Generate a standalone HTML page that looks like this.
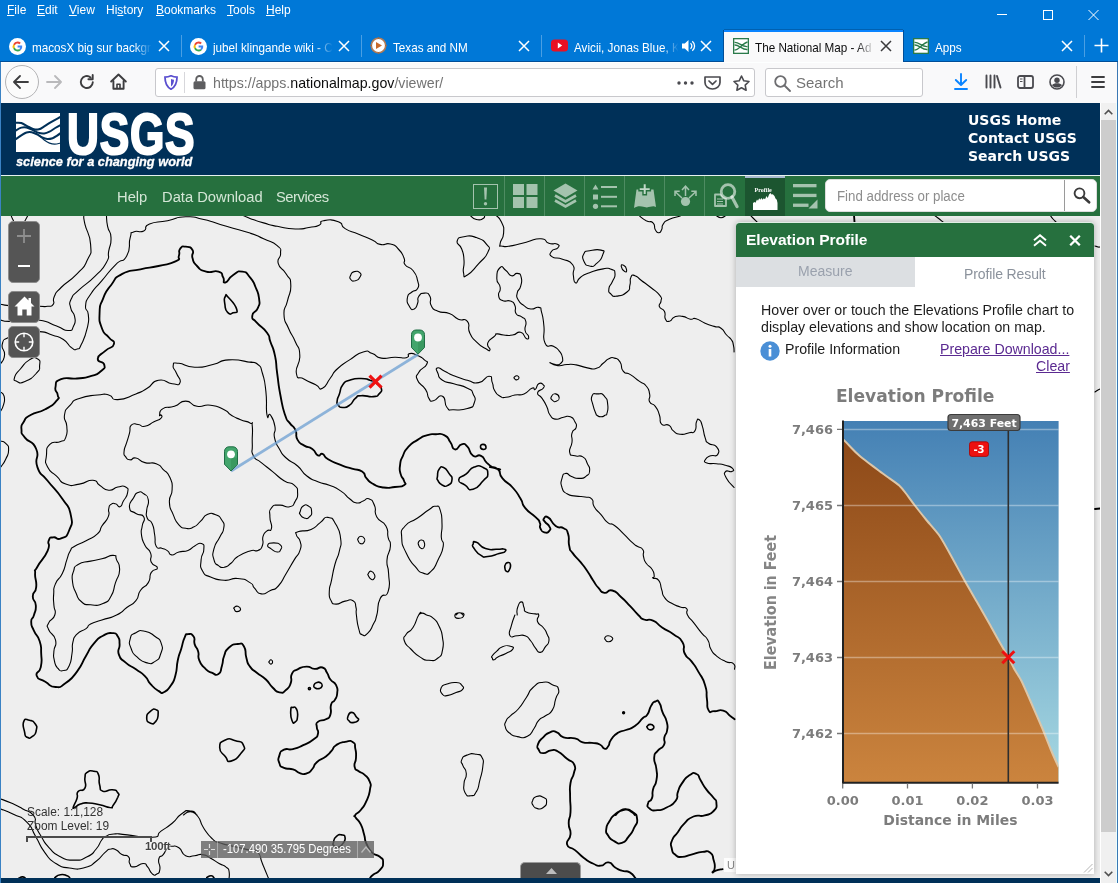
<!DOCTYPE html>
<html lang="en">
<head>
<meta charset="utf-8">
<title>The National Map - Advanced Viewer</title>
<style>
*{box-sizing:border-box;margin:0;padding:0}
html,body{width:1118px;height:883px;overflow:hidden;background:#0078d7}
body{position:relative;font-family:"Liberation Sans",sans-serif;font-size:14px;color:#000}
.abs{position:absolute}
#chrome,#page,#vscroll{will-change:transform}
/* ---------- browser chrome ---------- */
#chrome{position:absolute;left:0;top:0;width:1118px;height:103px;background:#0078d7}
#menubar{position:absolute;left:0;top:0;width:1118px;height:30px;color:#fff;font-size:12px}
#menubar span{position:absolute;top:2px;line-height:17px;white-space:nowrap}
#menubar u{text-decoration:underline;text-underline-offset:1px}
#tabs{position:absolute;left:0;top:30px;width:1118px;height:32px;color:#fff;font-size:13.5px}
.tab{position:absolute;top:0;height:32px;white-space:nowrap;overflow:hidden}
#tabs .t{position:absolute;top:8.500px;line-height:17px;font-size:13px;transform:scaleX(.9);transform-origin:0 50%;white-space:nowrap;overflow:hidden;-webkit-mask-image:linear-gradient(90deg,#000 85%,transparent 100%);mask-image:linear-gradient(90deg,#000 85%,transparent 100%)}
.tabsep{position:absolute;top:5px;width:1px;height:22px;background:#4a9fe3}
#navbar{position:absolute;left:1px;top:62px;width:1117px;height:41px;background:#f9f9fa;box-shadow:inset 0 1px 0 #fdffff}
#urlbar{position:absolute;left:154px;top:6px;width:600px;height:29px;background:#fff;border:1px solid #c8c8cc;border-radius:3px}
#searchbar{position:absolute;left:764px;top:6px;width:158px;height:29px;background:#fff;border:1px solid #c8c8cc;border-radius:3px}
/* ---------- page ---------- */
#page{position:absolute;left:1px;top:103px;width:1099px;height:780px;background:#eee;overflow:hidden}
#usgs{position:absolute;left:0;top:0;width:1099px;height:72px;background:#003058}
#toolbar{position:absolute;left:0;top:72px;width:1099px;height:41px;background:#26703e;border-top:1px solid #e6f2f0}
.navl{top:10.500px;font-size:15.500px;line-height:19px;color:#d4e6d6;white-space:nowrap;transform:scaleX(.95);transform-origin:0 0}
.sep{position:absolute;top:0;width:1px;height:40px;background:#4e8c62}
#map{position:absolute;left:0;top:113px;width:1099px;height:662px;background:#eeeeee;overflow:hidden}
#footer{position:absolute;left:0;top:775px;width:1099px;height:5px;background:#003058}
#vscroll{position:absolute;left:1100px;top:103px;width:17px;height:780px;background:#f0f0f0;border-right:1px solid #eaffff;border-left:1px solid #fff}


#panel{position:absolute;left:735px;top:119px;width:358px;height:652px;background:#fff;border-radius:4px 4px 0 0;box-shadow:0 0 6px rgba(0,0,0,.28)}
#phead{position:absolute;left:0;top:0;width:358px;height:35px;background:#26703e;border-radius:4px 4px 0 0;border-top:1px solid #dfeee4}
#phead .ttl{position:absolute;left:10px;top:7px;font-weight:bold;font-size:15.500px;line-height:19px;color:#fff;white-space:nowrap}
#tabm{position:absolute;left:0;top:35px;width:179px;height:30px;background:#dcdfe2}
.ptxt{position:absolute;white-space:nowrap;font-size:14.200px;line-height:17px;color:#1c1c1c}
.dv{font-family:"DejaVu Sans","Liberation Sans",sans-serif;font-weight:bold;fill:#7c7c7c}

.mbtn{position:absolute;left:7px;width:32px;background:#555;border:1px solid #8d8d8d;border-radius:5px}
</style>
</head>
<body>
<div id="chrome">
  <div id="menubar">
<span style="left:7px"><u>F</u>ile</span>
<span style="left:37px"><u>E</u>dit</span>
<span style="left:69px"><u>V</u>iew</span>
<span style="left:106px">Hi<u>s</u>tory</span>
<span style="left:156px"><u>B</u>ookmarks</span>
<span style="left:227px"><u>T</u>ools</span>
<span style="left:266px"><u>H</u>elp</span>
<svg class="abs" style="left:990px;top:5px" width="120" height="20" viewBox="0 0 120 20" fill="none" stroke="#fff" stroke-width="1">
<path d="M7 9.5h10"/><rect x="53.5" y="5.5" width="9" height="9"/><path d="M98.5 5l10 10M108.5 5l-10 10"/></svg>
</div>
  <div id="tabs">
<div class="abs" style="left:0;top:31px;width:1118px;height:1px;background:#004e98"></div><svg class="abs" style="left:9px;top:8px" width="17" height="17" viewBox="0 0 17 17"><circle cx="8.5" cy="8.5" r="8.5" fill="#fff"/>
<path d="M8.5 3.6a4.9 4.9 0 0 1 3.3 1.25l-1.4 1.35A2.9 2.9 0 0 0 5.8 7.4L4.2 6.2A4.9 4.9 0 0 1 8.5 3.6z" fill="#ea4335"/>
<path d="M4.2 6.2l1.6 1.2a2.9 2.9 0 0 0 0 2.2l-1.6 1.2a4.9 4.9 0 0 1 0-4.6z" fill="#fbbc05"/>
<path d="M4.2 10.8l1.6-1.2a2.9 2.9 0 0 0 4.4 1.4l1.5 1.2a4.9 4.9 0 0 1-7.5-1.4z" fill="#34a853"/>
<path d="M8.6 7.6h4.6a4.9 4.9 0 0 1-1.5 4.6l-1.5-1.2a2.6 2.6 0 0 0 1-1.6H8.6z" fill="#4285f4"/></svg><span class="t" style="left:32px;width:133px">macosX big sur backgr</span><svg class="abs" style="left:158px;top:10px" width="12" height="12" viewBox="0 0 12 12" fill="none" stroke="#fff" stroke-width="1.5"><path d="M1 1l10 10M11 1L1 11"/></svg><div class="tabsep" style="left:181px"></div><svg class="abs" style="left:190px;top:8px" width="17" height="17" viewBox="0 0 17 17"><circle cx="8.5" cy="8.5" r="8.5" fill="#fff"/>
<path d="M8.5 3.6a4.9 4.9 0 0 1 3.3 1.25l-1.4 1.35A2.9 2.9 0 0 0 5.8 7.4L4.2 6.2A4.9 4.9 0 0 1 8.5 3.6z" fill="#ea4335"/>
<path d="M4.2 6.2l1.6 1.2a2.9 2.9 0 0 0 0 2.2l-1.6 1.2a4.9 4.9 0 0 1 0-4.6z" fill="#fbbc05"/>
<path d="M4.2 10.8l1.6-1.2a2.9 2.9 0 0 0 4.4 1.4l1.5 1.2a4.9 4.9 0 0 1-7.5-1.4z" fill="#34a853"/>
<path d="M8.6 7.6h4.6a4.9 4.9 0 0 1-1.5 4.6l-1.5-1.2a2.6 2.6 0 0 0 1-1.6H8.6z" fill="#4285f4"/></svg><span class="t" style="left:213px;width:133px">jubel klingande wiki - C</span><svg class="abs" style="left:338px;top:10px" width="12" height="12" viewBox="0 0 12 12" fill="none" stroke="#fff" stroke-width="1.5"><path d="M1 1l10 10M11 1L1 11"/></svg><div class="tabsep" style="left:361px"></div><svg class="abs" style="left:370px;top:7px" width="17" height="17" viewBox="0 0 17 17"><circle cx="8.5" cy="8.500" r="7.200" fill="#fff" stroke="#b07a55" stroke-width="1.600"/><path d="M6 5l6 3.500-6 3.500z" fill="#c86a2a"/><path d="M8.500 0v2M8.500 15v2M0 8.500h2M15 8.500h2" stroke="#9a6a4a" stroke-width="1.200"/></svg><span class="t" style="left:393px;width:133px">Texas and NM</span><svg class="abs" style="left:518px;top:10px" width="12" height="12" viewBox="0 0 12 12" fill="none" stroke="#fff" stroke-width="1.5"><path d="M1 1l10 10M11 1L1 11"/></svg><div class="tabsep" style="left:541px"></div><svg class="abs" style="left:551px;top:9px" width="17" height="13" viewBox="0 0 17 13"><rect x="0" y="0.500" width="17" height="12" rx="3.500" fill="#e81123"/><path d="M6.800 3.600l4.400 2.900-4.400 2.900z" fill="#fff"/></svg><span class="t" style="left:574px;width:116px">Avicii, Jonas Blue, K</span><svg class="abs" style="left:681px;top:9px" width="16" height="14" viewBox="0 0 16 14"><path d="M1 4.500h2.800L7.500 1v12L3.800 9.500H1z" fill="#fff"/><path d="M9.500 4.200a3.600 3.600 0 0 1 0 5.600M11.300 2.200a6.200 6.200 0 0 1 0 9.600" fill="none" stroke="#fff" stroke-width="1.300"/></svg><svg class="abs" style="left:700px;top:10px" width="12" height="12" viewBox="0 0 12 12" fill="none" stroke="#fff" stroke-width="1.5"><path d="M1 1l10 10M11 1L1 11"/></svg><div class="abs" style="left:724px;top:0;width:179px;height:32px;background:#f9f9fa;border-top:2px solid #0a84ff;box-shadow:0 -1px 0 #0060b0,-1px 0 0 #004e98,1px 0 0 #004e98"></div><svg class="abs" style="left:733px;top:8px" width="16" height="16" viewBox="0 0 16 16"><rect x="0.5" y="0.5" width="15" height="15" fill="#fff" stroke="#2a7a4a" stroke-width="1.6"/><path d="M1.5 4.5C6 4 9 9 14.5 8.500M1.500 7C6 6.500 9 12 14.5 11.500M1.500 12C6 12 10 5 14.5 4" fill="none" stroke="#2a7a4a" stroke-width="1.300"/></svg><span class="t" style="left:755px;width:133px;color:#0c0c0d">The National Map - Ad</span><svg class="abs" style="left:880px;top:10px" width="12" height="12" viewBox="0 0 12 12" fill="none" stroke="#3a3a3c" stroke-width="1.5"><path d="M1 1l10 10M11 1L1 11"/></svg><svg class="abs" style="left:913px;top:8px" width="16" height="16" viewBox="0 0 16 16"><rect x="0.5" y="0.5" width="15" height="15" fill="#fff" stroke="#2a7a4a" stroke-width="1.6"/><path d="M1.5 4.5C6 4 9 9 14.5 8.500M1.500 7C6 6.500 9 12 14.5 11.500M1.500 12C6 12 10 5 14.5 4" fill="none" stroke="#2a7a4a" stroke-width="1.300"/></svg><span class="t" style="left:935px;width:100px">Apps</span><svg class="abs" style="left:1061px;top:10px" width="12" height="12" viewBox="0 0 12 12" fill="none" stroke="#fff" stroke-width="1.5"><path d="M1 1l10 10M11 1L1 11"/></svg><div class="tabsep" style="left:1084px"></div><svg class="abs" style="left:1094px;top:8px" width="15" height="15" viewBox="0 0 15 15" stroke="#fff" stroke-width="1.600"><path d="M7.500 0.500v14M0.500 7.500h14"/></svg>
</div>
  <div id="navbar">
<div class="abs" style="left:4px;top:3px;width:34px;height:34px;border:1px solid #b4b4b6;border-radius:50%;background:#fbfbfb"></div>
<svg class="abs" style="left:12px;top:13px" width="16" height="14" viewBox="0 0 16 14" fill="none" stroke="#3d3d3f" stroke-width="1.800" stroke-linecap="round" stroke-linejoin="round"><path d="M15 7H1.500M7 1L1 7l6 6"/></svg>
<svg class="abs" style="left:45px;top:13px" width="16" height="14" viewBox="0 0 16 14" fill="none" stroke="#b9b9bb" stroke-width="1.800" stroke-linecap="round" stroke-linejoin="round"><path d="M1 7h13.500M9 1l6 6-6 6"/></svg>
<svg class="abs" style="left:78px;top:12px" width="16" height="16" viewBox="0 0 16 16" fill="none" stroke="#3d3d3f" stroke-width="1.900" stroke-linecap="round"><path d="M13.800 8.300A6 6 0 1 1 11.600 3.400"/><path d="M13.700 1v4.300H9.400" stroke-linejoin="round"/></svg>
<svg class="abs" style="left:109px;top:11px" width="17" height="17" viewBox="0 0 17 17" fill="none" stroke="#3d3d3f" stroke-width="1.900" stroke-linejoin="round" stroke-linecap="round"><path d="M1.200 8.500L8.500 1.500l7.300 7"/><path d="M3.400 8v7.700h10.200V8"/><path d="M7 15.500v-4.300h3v4.300" stroke-width="1.600"/></svg>
<div id="urlbar">
<svg class="abs" style="left:8px;top:6px" width="14" height="15" viewBox="0 0 14 15"><path d="M7 0.800c2 1 4 1.400 6 1.400 0 5.500-1.500 9.500-6 12-4.500-2.500-6-6.500-6-12 2 0 4-.4 6-1.400z" fill="#fff" stroke="#5a4fcf" stroke-width="1.800"/><path d="M7 4v7.500c2-1.500 3-4 3-6.700-1 0-2-.3-3-.8z" fill="#5a4fcf"/></svg>
<div class="abs" style="left:28px;top:3px;width:1px;height:21px;background:#d7d7db"></div>
<svg class="abs" style="left:37px;top:6px" width="13" height="15" viewBox="0 0 13 15"><path d="M3.200 6.500V4.300a3.300 3.300 0 0 1 6.600 0v2.200" fill="none" stroke="#5e5e60" stroke-width="1.800"/><rect x="0.500" y="6.300" width="12" height="8" rx="1.500" fill="#5e5e60"/></svg>
<span class="abs" id="urltxt" style="left:57px;top:4px;line-height:20px;font-size:14.2px;color:#737373;white-space:nowrap">https://apps.<span style="color:#0c0c0d">nationalmap.gov</span>/viewer/</span>
<svg class="abs" style="left:521px;top:12px" width="17" height="4" viewBox="0 0 17 4" fill="#4a4a4f"><circle cx="2" cy="2" r="1.700"/><circle cx="8.500" cy="2" r="1.700"/><circle cx="15" cy="2" r="1.700"/></svg>
<svg class="abs" style="left:548px;top:7px" width="17" height="14" viewBox="0 0 17 14" fill="none" stroke="#4a4a4f" stroke-width="1.700" stroke-linecap="round" stroke-linejoin="round"><path d="M1 1h15v5.500a7.500 6.500 0 0 1-15 0z"/><path d="M5 5l3.500 3.300L12 5"/></svg>
<svg class="abs" style="left:577px;top:6px" width="17" height="16" viewBox="0 0 17 16" fill="none" stroke="#4a4a4f" stroke-width="1.600" stroke-linejoin="round"><path d="M8.500 1l2.300 4.800 5.200.7-3.800 3.600.9 5.100-4.600-2.500-4.600 2.500.9-5.100L1 6.500l5.200-.7z"/></svg>
</div>
<div id="searchbar">
<svg class="abs" style="left:8px;top:6px" width="17" height="17" viewBox="0 0 17 17" fill="none" stroke="#6d6d70" stroke-width="1.800" stroke-linecap="round"><circle cx="6.500" cy="6.500" r="5.300"/><path d="M10.500 10.500L16 16"/></svg>
<span class="abs" style="left:30px;top:4px;line-height:20px;font-size:15px;color:#737373">Search</span>
</div>
<svg class="abs" style="left:953px;top:11px" width="14" height="17" viewBox="0 0 14 17" fill="none" stroke="#0a84ff" stroke-width="1.900" stroke-linecap="round" stroke-linejoin="round"><path d="M7 1v10.500M1.800 7L7 12l5.200-5M1 16h12"/></svg>
<svg class="abs" style="left:984px;top:12px" width="17" height="15" viewBox="0 0 17 15" fill="none" stroke="#4a4a4f" stroke-width="1.900" stroke-linecap="round"><path d="M1.500 1.500v12M5.500 1.500v12M9.500 1.500v12M12 2l3.500 11.500"/></svg>
<svg class="abs" style="left:1016px;top:13px" width="17" height="14" viewBox="0 0 17 14" fill="none" stroke="#4a4a4f" stroke-width="1.800"><rect x="1" y="1" width="15" height="12" rx="2"/><path d="M7.500 1v12"/><path d="M3 4h2.500M3 6.500h2.500" stroke-width="1.200"/></svg>
<svg class="abs" style="left:1048px;top:12px" width="16" height="16" viewBox="0 0 16 16"><circle cx="8" cy="8" r="7" fill="none" stroke="#4a4a4f" stroke-width="1.600"/><circle cx="8" cy="6.300" r="2.700" fill="#4a4a4f"/><path d="M3 11.200c1.200 1.500 3 2.300 5 2.300s3.800-.8 5-2.300c-1-1.400-2.800-2-5-2s-4 .6-5 2z" fill="#4a4a4f"/></svg>
<div class="abs" style="left:1075px;top:4px;width:1px;height:32px;background:#cfcfd2"></div>
<svg class="abs" style="left:1090px;top:13px" width="14" height="14" viewBox="0 0 14 14" stroke="#3d3d3f" stroke-width="1.900" stroke-linecap="round"><path d="M1 2h12M1 7h12M1 12h12"/></svg>
</div>
</div>
<div id="page">
  <div id="usgs">
<svg class="abs" style="left:15px;top:10px" width="44" height="39" viewBox="0 0 44 39"><rect width="44" height="39" fill="#fff"/>
<g fill="none" stroke="#003058"><path d="M-1 9.8C0.1 9.8 3.2 9.4 5.3 10C7.4 10.6 9.5 12.3 11.6 13.4C13.7 14.5 15.9 15.8 17.8 16.3C19.7 16.8 21.3 16.8 23 16.3C24.7 15.8 26.1 14.7 28.2 13.4C30.3 12.2 32.7 10.4 35.5 8.8C38.3 7.2 43.4 4.5 45 3.6" stroke-width="2.100"/><path d="M-1 18C0.1 17.4 3.4 15.3 5.3 14.7C7.2 14.1 8.6 14.1 10.5 14.5C12.4 14.9 14.9 16.2 16.8 17.1C18.7 18.0 20.1 19.1 22 19.7C23.9 20.3 26.3 20.7 28.2 20.5C30.1 20.3 31.7 19.6 33.5 18.7C35.3 17.8 37.3 16.1 39.2 15C41.1 13.9 44.0 12.4 45 11.9" stroke-width="1.900"/><path d="M-1 26.7C0.1 26.0 3.4 23.5 5.3 22.3C7.2 21.1 8.8 19.9 10.5 19.4C12.2 18.9 13.9 18.9 15.7 19.2C17.4 19.5 19.2 20.4 21 21.3C22.8 22.2 24.5 23.6 26.2 24.4C27.9 25.2 29.7 25.9 31.4 26C33.1 26.1 35.0 25.7 36.6 25.2C38.2 24.7 39.4 23.7 40.8 22.8C42.2 21.9 44.3 20.4 45 19.9" stroke-width="2.100"/><path d="M23 22.3C23.9 23.1 26.4 25.7 28.2 27C29.9 28.3 31.8 29.4 33.5 30.1C35.2 30.8 36.8 31.2 38.7 31.2C40.6 31.2 44.0 30.2 45 30" stroke-width="1.200"/></g></svg>
<div class="abs" id="usgstxt" style="left:66px;top:-1.500px;font-weight:bold;font-size:57px;line-height:64px;color:#fff;transform:scaleX(.775);transform-origin:0 0;-webkit-text-stroke:2.200px #fff;white-space:nowrap;letter-spacing:1px">USGS</div>
<div class="abs" id="tagline" style="left:15px;top:51px;font-weight:bold;font-style:italic;font-size:13.500px;line-height:16px;color:#fff;transform:scaleX(.948);transform-origin:0 0;white-space:nowrap;-webkit-text-stroke:.3px #fff">science for a changing world</div>
<div class="abs" id="usgslinks" style="left:967px;top:8px;font-family:'DejaVu Sans','Liberation Sans',sans-serif;font-weight:bold;font-size:14px;line-height:18px;color:#fff;white-space:nowrap">USGS Home<br>Contact USGS<br>Search USGS</div>
</div>
  <div id="toolbar">
<div class="abs navl" style="left:116px">Help</div>
<div class="abs navl" style="left:161px">Data Download</div>
<div class="abs navl" style="left:275px;letter-spacing:-.5px">Services</div>
<div class="sep" style="left:503px"></div><div class="sep" style="left:543px"></div><div class="sep" style="left:583px"></div><div class="sep" style="left:623px"></div><div class="sep" style="left:663px"></div><div class="sep" style="left:703px"></div>
<div class="abs" style="left:744px;top:0;width:40px;height:40px;background:#1c5530;border-top:2px solid #a8b9d0"></div>
<!-- ! -->
<svg class="abs" style="left:472px;top:8px" width="25" height="25" viewBox="0 0 25 25"><rect x="0.500" y="0.500" width="24" height="24" fill="none" stroke="rgba(255,255,255,.58)" stroke-width="1"/><path d="M11 3.500h3l-.6 12h-1.800z" fill="rgba(255,255,255,.58)"/><circle cx="12.500" cy="19.700" r="1.700" fill="rgba(255,255,255,.58)"/></svg>
<!-- grid -->
<svg class="abs" style="left:512px;top:8px" width="25" height="24" viewBox="0 0 25 24" fill="rgba(255,255,255,.58)"><rect x="0" y="0" width="11" height="11"/><rect x="13.500" y="0" width="11" height="11"/><rect x="0" y="13" width="11" height="11"/><rect x="13.500" y="13" width="11" height="11"/></svg>
<!-- layers -->
<svg class="abs" style="left:552px;top:7px" width="25" height="26" viewBox="0 0 25 26"><path d="M12.500 0.500L24.500 7.500 12.500 14.500 0.500 7.500z" fill="rgba(255,255,255,.58)"/><path d="M2 12.500L12.500 18.500 23 12.500M2 17.500L12.500 23.500 23 17.500" fill="none" stroke="rgba(255,255,255,.58)" stroke-width="2.600"/></svg>
<!-- list -->
<svg class="abs" style="left:591px;top:8px" width="26" height="26" viewBox="0 0 26 26" fill="rgba(255,255,255,.58)"><path d="M3.500 0.500L6.500 5.500H0.500z"/><rect x="1" y="10.500" width="5" height="5"/><circle cx="3.500" cy="22.300" r="2.600"/><rect x="9" y="2" width="16" height="2"/><rect x="9" y="11.800" width="16" height="2"/><rect x="9" y="21.300" width="16" height="2"/></svg>
<!-- add data -->
<svg class="abs" style="left:632px;top:7px" width="24" height="26" viewBox="0 0 24 26"><path d="M3.500 6.500H20.500L23 24c-4-2-7 1.500-11.500 0S4 23 1 25z" fill="rgba(255,255,255,.58)"/><path d="M10 0.500h3.400v4h4v3.200h-4v4H10v-4H6v-3.200h4z" fill="#c2dac9" stroke="#26703e" stroke-width="1.400"/></svg>
<!-- share -->
<svg class="abs" style="left:672px;top:9px" width="25" height="22" viewBox="0 0 25 22"><circle cx="12.500" cy="16.500" r="4.600" fill="rgba(255,255,255,.58)"/><g fill="none" stroke="rgba(255,255,255,.58)" stroke-width="1.500"><path d="M12.500 11V1.500M9 5l3.500-3.800L16 5"/><path d="M9 13L2 6.500M2 11V6.300h4.700"/><path d="M16 13l7-6.500M23 11V6.300h-4.700"/></g></svg>
<!-- search doc -->
<svg class="abs" style="left:712px;top:7px" width="26" height="26" viewBox="0 0 26 26"><circle cx="15" cy="8.500" r="6.800" fill="none" stroke="rgba(255,255,255,.58)" stroke-width="2.800"/><path d="M19 14l5 9.500" stroke="rgba(255,255,255,.58)" stroke-width="3.200" stroke-linecap="round"/><path d="M2 11.500h5.500c1 2.500 3 4 5.500 4.500V23H2z" fill="none" stroke="rgba(255,255,255,.58)" stroke-width="1.800" stroke-linejoin="round"/><path d="M4 16h6M4 18.500h6M4 21h6" stroke="rgba(255,255,255,.58)" stroke-width="1.200"/></svg>
<!-- profile -->
<div class="abs" style="left:753.500px;top:10px;font-family:'Liberation Serif',serif;font-weight:bold;font-size:6px;line-height:8px;color:#fff">Profile</div>
<svg class="abs" style="left:752px;top:17px" width="25" height="17" viewBox="0 0 25 17"><path d="M0 17V10l1.500-1 1 .8L4 6.500l1 1.300 1.200-2.600 1 1.600L8.500 5l1 1.800 1.300-1.500 1.200 1L13.500 3l1.200 2 1.500-3.800L17.500 0l1 1.500 1.300-.3L21.500 3l1 2.500 1.300 1.300L24.500 10v7z" fill="#fff"/></svg>
<!-- menu -->
<svg class="abs" style="left:792px;top:8px" width="25" height="25" viewBox="0 0 25 25" fill="rgba(255,255,255,.58)"><rect x="0" y="0" width="23.500" height="3.300"/><rect x="0" y="9.800" width="23.500" height="3.300"/><rect x="0" y="19.600" width="15.500" height="3.300"/><path d="M24.500 15.500v9h-9z"/></svg>
<!-- search box -->
<div class="abs" style="left:824px;top:3px;width:272px;height:33px;background:#fff;border-radius:5px;border:1px solid #ddd"></div>
<div class="abs" style="left:1063px;top:4px;width:1px;height:31px;background:#9a9a9a"></div>
<div class="abs" id="find" style="left:836px;top:10px;font-size:15.200px;line-height:19px;color:#8d8d8d;white-space:nowrap;transform:scaleX(.875);transform-origin:0 0">Find address or place</div>
<svg class="abs" style="left:1072px;top:11px" width="18" height="17" viewBox="0 0 18 17" fill="none" stroke="#3b3b3b"><circle cx="6.500" cy="6.300" r="4.900" stroke-width="1.900"/><path d="M10.300 10l5.800 5.300" stroke-width="2.600" stroke-linecap="round"/></svg>
</div>
  <div id="map"><!--MAPSVG--><svg class="abs" id="contours" style="left:0;top:0" width="1099" height="662" viewBox="1 216 1099 662">
<path fill="none" stroke="#000" stroke-width="1.1" stroke-linejoin="round" stroke-linecap="round" d="M0.0 364.5C1.5 361.4 3.8 362.2 4.5 355.4C5.3 348.6 0.8 350.1 2.3 344.1C3.8 338.0 2.3 341.1 9.1 337.3C15.9 333.5 12.5 334.6 22.6 332.8C32.8 330.9 29.8 330.9 39.6 331.6C49.4 332.4 44.2 332.4 52.1 335.0C60.0 337.7 57.0 335.4 63.4 339.5C69.8 343.7 66.8 344.3 71.3 347.5C75.9 350.6 73.6 350.2 77.0 349.1C80.4 347.9 78.1 351.0 81.5 344.1C84.9 337.1 84.9 338.0 87.2 328.2C89.4 318.4 88.8 322.2 88.3 314.6C87.8 307.1 84.8 312.4 85.6 305.6C86.4 298.8 85.1 302.6 90.6 294.3C96.0 286.0 93.6 290.5 101.9 280.7C110.2 270.9 107.2 273.1 115.5 264.8C123.8 256.5 121.9 264.8 126.8 255.8C131.7 246.7 127.9 245.6 130.2 237.6C132.5 229.7 129.1 234.2 133.6 232.0C138.1 229.7 138.5 233.5 143.8 230.9C149.1 228.2 141.5 227.5 149.5 224.1C157.4 220.7 155.5 223.1 167.6 220.7C179.6 218.2 173.6 217.2 185.7 216.8C197.8 216.4 190.2 216.4 203.8 219.5C217.4 222.7 211.1 221.8 226.4 226.3C241.8 230.9 237.6 229.0 250.0 233.1C262.4 237.3 254.5 234.6 263.6 238.8C272.6 242.9 271.5 240.7 277.2 245.6C282.8 250.5 280.2 247.5 280.6 253.5C280.9 259.5 276.4 256.9 278.3 263.7C280.2 270.5 282.1 266.7 286.2 273.9C290.4 281.0 290.4 276.1 290.8 285.2C291.1 294.3 289.6 291.2 287.4 301.1C285.1 310.9 283.6 305.6 284.0 314.6C284.3 323.7 284.7 319.2 288.5 328.2C292.3 337.3 291.5 332.8 295.3 341.8C299.1 350.9 299.4 344.8 299.8 355.4C300.2 366.0 294.9 365.6 296.4 373.5C297.9 381.4 297.9 375.4 304.3 379.2C310.8 382.9 309.6 381.8 315.7 384.8C321.7 387.9 317.6 390.5 322.5 388.2C327.4 386.0 325.5 384.5 330.4 378.0C335.3 371.6 330.8 375.0 337.2 369.0C343.6 362.9 341.0 365.6 349.6 359.9C358.3 354.3 355.7 354.1 363.2 352.0C370.8 349.9 366.2 351.5 372.3 353.6C378.3 355.6 373.8 356.9 381.3 358.1C388.9 359.3 386.6 357.4 394.9 357.2C403.2 357.1 401.3 358.9 406.2 357.7C411.2 356.5 405.9 354.3 409.6 353.6C413.4 352.8 412.7 353.3 417.6 355.4C422.5 357.5 421.3 356.9 424.4 359.9C427.4 362.9 428.5 360.3 426.6 364.5C424.7 368.6 421.7 367.1 418.7 372.4C415.7 377.7 415.3 374.6 417.6 380.3C419.8 386.0 421.7 383.3 425.5 389.4C429.3 395.4 426.3 394.6 428.9 398.4C431.5 402.2 428.9 401.4 433.4 400.7C438.0 399.9 438.0 393.9 442.5 396.2C447.0 398.4 443.2 403.0 447.0 407.5C450.8 412.0 447.0 409.4 453.8 409.7C460.6 410.1 460.6 410.9 467.4 408.6C474.2 406.3 472.3 407.9 474.2 403.0C476.1 398.0 475.3 398.8 473.1 393.9C470.8 389.0 473.8 391.6 467.4 388.2C461.0 384.8 462.1 386.3 453.8 383.7C445.5 381.1 447.8 383.7 442.5 380.3C437.2 376.9 439.6 377.7 438.0 373.5C436.3 369.4 435.2 368.6 437.5 367.9C439.8 367.1 439.3 368.6 444.7 371.2C450.2 373.9 446.3 372.8 453.8 375.8C461.4 378.8 459.1 378.0 467.4 380.3C475.7 382.6 471.5 383.9 478.7 382.6C485.9 381.2 484.4 376.2 488.9 376.2C493.4 376.2 490.4 377.8 492.3 382.6C494.2 387.3 492.0 386.0 494.6 390.5C497.1 395.0 496.2 393.9 500.0 396.2C503.8 398.4 500.9 397.7 505.9 397.3C510.8 396.9 508.9 396.2 514.9 395.0C520.9 393.9 518.3 396.2 524.0 393.9C529.6 391.6 528.1 389.7 531.9 388.2C535.7 386.7 533.0 390.9 535.3 389.4C537.6 387.9 536.0 385.2 538.7 383.7C541.3 382.2 541.7 383.3 543.2 384.8C544.7 386.3 545.1 385.6 543.2 388.2C541.3 390.9 537.9 389.4 537.6 392.8C537.2 396.2 539.1 393.9 542.1 398.4C545.1 403.0 544.0 400.8 546.6 406.3C549.3 411.9 547.0 410.7 550.0 415.0C553.0 419.2 551.1 418.3 555.7 419.1C560.2 419.8 558.7 418.0 563.6 417.3C568.5 416.5 566.6 415.3 570.4 416.8C574.2 418.3 573.0 418.2 574.9 421.8C576.8 425.3 577.0 423.7 576.1 427.5C575.1 431.2 573.3 428.2 572.0 433.1C570.6 438.0 572.7 435.8 572.0 442.2C571.2 448.6 568.7 447.8 569.7 452.4C570.7 456.9 570.5 454.3 574.9 455.8C579.3 457.3 578.7 454.3 582.8 456.9C587.0 459.5 585.1 459.2 587.4 463.7C589.6 468.2 590.0 466.3 589.6 470.5C589.3 474.6 589.6 473.5 586.2 476.1C582.8 478.8 584.4 478.3 579.4 478.4C574.5 478.6 576.1 478.3 571.5 476.6C567.0 474.9 569.0 472.8 565.9 473.4C562.7 474.0 563.3 473.7 562.0 478.4C560.7 483.1 560.4 482.3 562.0 487.5C563.7 492.6 562.3 490.9 567.0 493.8C571.7 496.7 570.0 495.0 576.1 496.1C582.1 497.1 579.8 495.9 585.1 497.0C590.4 498.0 588.9 496.0 591.9 499.2C594.9 502.5 591.1 501.6 594.2 506.7C597.2 511.8 596.4 509.4 601.0 514.6C605.5 519.9 603.2 518.9 607.8 522.6C612.3 526.2 609.3 521.7 614.5 525.5C619.8 529.3 617.6 528.1 623.6 533.9C629.6 539.7 628.1 538.8 632.7 542.9C637.2 547.1 633.8 544.1 637.2 546.3C640.6 548.6 640.7 546.3 642.9 549.7C645.0 553.1 642.4 552.0 643.5 556.5C644.7 561.1 643.5 559.2 646.2 563.3C649.0 567.5 649.3 564.8 651.9 569.0C654.6 573.1 653.8 572.8 654.2 575.8C654.6 578.8 651.5 576.5 653.0 578.0C654.6 579.6 655.8 576.5 658.7 580.3C661.6 584.1 659.8 583.7 661.6 589.4C663.5 595.0 661.2 592.8 664.4 597.3C667.5 601.8 665.9 599.7 671.2 603.0C676.4 606.2 675.1 605.1 680.2 607.0C685.4 608.9 684.1 606.0 686.6 608.6C689.0 611.3 685.0 610.2 687.5 615.0C689.9 619.7 689.0 616.9 693.8 622.9C698.6 629.0 697.1 627.5 701.7 633.1C706.4 638.8 704.8 634.6 707.8 639.9C710.9 645.2 707.9 643.7 710.8 649.0C713.7 654.3 711.5 651.6 716.4 655.8C721.4 659.9 719.8 658.8 725.5 661.4C731.2 664.1 730.4 661.0 733.4 663.7C736.5 666.3 734.2 667.5 734.6 669.3 M242.3 215.0C244.9 216.1 242.9 215.8 250.0 218.4C257.1 221.0 254.5 220.3 263.6 222.9C272.6 225.6 266.6 224.3 277.2 226.3C287.7 228.4 284.7 228.7 295.3 229.0C305.9 229.4 301.0 228.7 308.9 227.5C316.8 226.2 314.2 227.5 319.1 225.2C324.0 222.9 317.2 221.8 323.6 220.7C330.0 219.5 331.1 219.2 338.3 221.8C345.5 224.4 338.3 224.4 345.1 228.6C351.9 232.7 349.6 230.5 358.7 234.2C367.8 238.0 365.1 236.5 372.3 239.9C379.5 243.3 374.2 243.1 380.2 244.4C386.2 245.8 384.4 242.5 390.4 244.0C396.4 245.5 393.8 244.3 398.3 249.0C402.9 253.6 401.7 252.7 404.0 258.0C406.2 263.3 402.1 260.7 405.1 264.8C408.1 269.0 408.9 265.2 413.0 270.5C417.2 275.8 416.1 274.6 417.6 280.7C419.1 286.7 419.5 284.8 417.6 288.6C415.7 292.4 415.3 289.0 411.9 292.0C408.5 295.0 408.1 292.7 407.4 297.7C406.6 302.6 407.4 302.9 409.6 306.7C411.9 310.5 411.5 310.1 414.2 309.0C416.8 307.8 416.1 307.5 417.6 303.3C419.1 299.2 416.4 299.9 418.7 296.5C421.0 293.1 420.6 293.1 424.4 293.1C428.1 293.1 427.8 292.4 430.0 296.5C432.3 300.7 428.5 300.7 431.2 305.6C433.8 310.5 431.9 308.6 438.0 311.2C444.0 313.9 442.5 310.9 449.3 313.5C456.1 316.1 452.3 316.5 458.3 319.2C464.4 321.8 463.6 316.9 467.4 321.4C471.2 326.0 466.6 326.0 469.7 332.8C472.7 339.5 471.2 336.5 476.4 341.8C481.7 347.1 481.0 346.0 485.5 348.6C490.0 351.2 489.3 351.6 490.0 349.7C490.8 347.9 486.3 347.5 487.8 342.9C489.3 338.4 491.6 339.2 494.6 336.2C497.6 333.1 493.8 334.3 496.8 333.9C499.8 333.5 498.3 334.6 503.6 335.0C508.9 335.4 507.0 335.9 512.6 335.0C518.3 334.1 516.0 331.2 520.6 332.3C525.1 333.4 523.6 337.1 526.2 338.4C528.9 339.7 528.9 338.8 528.5 336.2C528.1 333.5 526.0 335.4 525.1 330.5C524.2 325.6 526.9 326.0 525.8 321.4C524.6 316.9 524.9 319.5 521.7 316.9C518.5 314.3 518.3 317.3 516.0 313.5C513.8 309.7 516.8 309.7 514.9 305.6C513.0 301.4 514.5 302.7 510.4 301.1C506.2 299.4 506.4 302.5 502.5 300.6C498.5 298.7 499.4 299.8 498.6 295.4C497.9 291.0 500.8 293.1 500.2 287.5C499.6 281.8 496.8 285.0 496.8 278.4C496.8 271.8 497.2 270.2 500.2 267.5C503.2 264.9 502.1 267.8 505.9 270.5C509.6 273.2 507.7 274.7 511.5 275.7C515.3 276.7 513.9 272.9 517.2 273.4C520.4 274.0 520.1 273.0 521.2 277.3C522.4 281.6 521.9 281.0 520.6 286.3C519.2 291.6 517.9 288.6 517.2 293.1C516.4 297.7 516.0 295.8 518.3 299.9C520.6 304.1 519.8 302.6 524.0 305.6C528.1 308.6 525.9 308.4 530.8 309.0C535.7 309.6 535.1 306.3 538.7 307.4C542.3 308.5 539.9 306.2 541.6 312.4C543.4 318.6 542.8 315.8 543.9 326.0C545.0 336.2 541.9 336.2 545.0 342.9C548.2 349.7 548.7 343.7 553.4 346.3C558.1 349.0 556.0 347.1 559.1 350.9C562.1 354.6 561.9 353.5 562.5 357.7C563.0 361.8 562.9 361.1 560.7 363.3C558.4 365.6 559.2 364.7 555.7 364.5C552.1 364.2 549.3 362.3 550.0 362.6C550.8 363.0 552.3 365.0 557.9 365.6C563.6 366.2 561.0 364.7 567.0 364.5C573.0 364.2 569.3 363.8 576.1 364.9C582.8 366.0 580.6 366.7 587.4 367.9C594.2 369.0 591.1 369.8 596.4 368.3C601.7 366.8 599.1 366.5 603.2 363.3C607.4 360.2 605.1 360.5 608.9 358.8C612.7 357.1 610.8 357.0 614.5 358.1C618.3 359.2 617.3 357.8 620.2 362.2C623.1 366.6 619.8 367.1 623.2 371.2C626.5 375.4 625.0 371.2 630.4 374.6C635.8 378.0 634.2 377.7 639.5 381.4C644.7 385.2 642.9 381.8 646.2 386.0C649.6 390.1 648.5 388.6 649.6 393.9C650.8 399.2 647.8 397.7 649.6 401.8C651.5 406.0 652.1 402.0 655.3 406.3C658.6 410.7 657.3 409.1 659.4 415.0C661.5 420.9 658.5 420.6 661.6 424.1C664.8 427.5 665.0 422.9 668.9 425.2C672.8 427.5 669.6 427.8 673.4 430.9C677.2 433.9 674.9 433.6 680.2 434.2C685.5 434.9 684.4 433.8 689.3 432.7C694.2 431.5 692.5 434.5 694.9 430.9C697.4 427.2 695.0 425.4 696.5 421.8C698.0 418.2 697.5 418.5 699.5 420.0C701.4 421.5 700.5 420.4 702.4 426.3C704.3 432.2 703.1 432.0 705.1 437.6C707.2 443.3 704.7 440.3 708.5 443.3C712.3 446.3 713.4 442.9 716.4 446.7C719.5 450.5 719.5 451.6 717.6 454.6C715.7 457.6 714.8 454.3 710.8 455.8C706.8 457.3 706.9 456.7 705.6 459.2C704.3 461.6 703.3 461.5 706.9 463.0C710.6 464.5 710.3 462.9 716.4 463.7C722.6 464.4 720.2 463.8 725.5 465.3C730.8 466.8 730.2 466.1 732.3 468.2C734.4 470.3 734.1 470.5 731.8 471.6C729.6 472.7 727.2 469.3 725.5 471.6C723.8 473.9 723.8 473.1 726.6 478.4C729.5 483.7 731.6 484.4 734.1 487.5 M250.0 362.2C242.9 361.4 241.1 359.2 228.7 359.9C216.3 360.7 224.2 362.0 212.9 364.5C201.5 366.9 206.1 367.6 194.7 367.2C183.4 366.8 186.1 363.9 178.9 363.3C171.7 362.8 174.0 362.2 173.2 365.6C172.5 369.0 174.4 367.9 176.6 373.5C178.9 379.2 181.5 379.2 180.0 382.6C178.5 386.0 179.3 384.5 172.1 383.7C164.9 382.9 166.8 378.8 158.5 380.3C150.2 381.8 154.7 383.7 147.2 388.2C139.6 392.8 145.7 390.1 135.9 393.9C126.1 397.7 126.8 399.2 117.8 399.6C108.7 399.9 115.5 396.5 108.7 395.0C101.9 393.5 107.2 393.9 97.4 395.0C87.6 396.2 88.3 395.0 79.3 398.4C70.2 401.8 75.1 399.7 70.2 405.2C65.3 410.7 65.7 407.9 64.5 415.0C63.4 422.0 66.4 418.8 66.8 426.3C67.2 433.9 67.9 432.5 65.7 437.6C63.4 442.8 65.3 439.5 60.0 441.7C54.7 444.0 54.3 439.8 49.8 444.4C45.3 449.1 47.2 448.2 46.4 455.8C45.7 463.3 44.2 460.3 47.6 467.1C51.0 473.9 50.6 470.5 56.6 476.1C62.7 481.8 58.1 481.4 65.7 484.1C73.2 486.7 70.2 485.4 79.3 484.1C88.3 482.8 86.1 479.8 92.8 480.2C99.6 480.6 94.4 481.9 99.6 485.2C104.9 488.5 102.7 489.6 108.7 490.2C114.7 490.8 112.1 488.1 117.8 487.0C123.4 486.0 122.4 485.0 125.7 487.0C128.9 489.0 128.2 488.4 127.5 493.1C126.7 497.8 125.9 496.5 123.4 501.1C120.9 505.6 122.7 505.8 120.0 506.7C117.4 507.6 118.5 504.5 115.5 503.8C112.5 503.0 113.2 502.7 111.0 504.4C108.7 506.2 109.6 504.8 108.7 509.0C107.8 513.1 110.5 511.2 108.2 516.9C106.0 522.6 105.5 520.3 101.9 526.0C98.3 531.6 102.7 529.0 97.4 533.9C92.1 538.8 93.6 536.5 86.1 540.7C78.5 544.8 80.0 542.9 74.7 546.3C69.4 549.7 72.8 546.3 70.2 550.9C67.6 555.4 69.4 552.4 66.8 559.9C64.2 567.5 66.0 565.6 62.3 573.5C58.5 581.4 58.3 576.9 55.5 583.7C52.6 590.5 54.2 586.7 53.7 593.9C53.1 601.1 53.5 598.2 53.9 605.2C54.3 612.2 56.5 609.1 54.8 615.0C53.1 620.9 50.7 618.0 48.7 622.9C46.6 627.8 46.4 624.1 48.7 629.7C51.0 635.4 53.7 632.7 55.5 639.9C57.2 647.1 54.3 644.4 53.9 651.2C53.5 658.0 53.1 654.6 54.3 660.3C55.6 666.0 54.7 664.8 57.7 668.2C60.8 671.6 59.6 671.2 63.4 670.5C67.2 669.7 66.2 671.6 69.1 666.0C71.9 660.3 70.7 661.4 72.0 653.5C73.3 645.6 71.3 648.6 72.9 642.2C74.6 635.8 72.6 638.8 77.0 634.2C81.4 629.7 81.5 632.0 86.1 628.6C90.6 625.2 85.3 626.9 90.6 624.1C95.9 621.2 93.2 623.0 101.9 620.0C110.6 617.0 108.3 619.2 116.6 615.0C124.9 610.8 120.4 612.3 126.8 607.5C133.2 602.7 131.3 606.3 135.9 600.7C140.4 595.0 136.2 596.5 140.4 590.5C144.6 584.5 144.7 588.6 148.3 582.6C151.9 576.5 148.2 577.3 151.3 572.4C154.3 567.5 157.4 571.2 157.4 567.9C157.4 564.5 153.5 567.1 151.3 562.2C149.0 557.3 152.7 558.8 150.6 553.1C148.5 547.5 147.9 551.2 144.9 545.2C141.9 539.2 142.4 541.4 141.5 535.0C140.6 528.6 141.5 532.0 142.2 526.0C143.0 519.9 145.9 521.1 143.8 516.9C141.7 512.8 140.6 516.7 135.9 513.5C131.1 510.3 130.3 512.7 129.5 507.4C128.8 502.1 130.7 502.6 133.6 497.7C136.5 492.7 134.7 493.7 138.1 492.4C141.5 491.2 140.4 491.3 143.8 493.8C147.2 496.3 147.3 494.5 148.3 499.9C149.3 505.4 147.1 504.1 146.7 510.1C146.4 516.1 145.4 513.5 147.2 518.0C149.0 522.6 149.7 518.0 152.2 523.7C154.7 529.4 153.3 527.5 154.7 535.0C156.0 542.6 153.8 542.0 156.2 546.3C158.7 550.7 158.1 546.6 161.9 548.2C165.7 549.7 164.3 548.6 167.6 550.9C170.8 553.1 167.9 554.6 171.6 554.9C175.4 555.3 173.5 553.5 178.9 552.0C184.3 550.5 182.7 552.5 188.0 550.4C193.2 548.4 190.2 548.2 194.7 545.9C199.3 543.6 198.5 542.3 201.5 543.6C204.6 544.9 204.0 544.3 203.8 549.7C203.7 555.2 201.5 552.8 201.1 559.9C200.7 567.1 199.5 565.6 202.7 571.2C205.8 576.9 203.4 573.9 210.6 576.9C217.8 579.9 215.1 579.8 224.2 580.3C233.2 580.8 229.2 577.7 237.8 578.5C246.4 579.3 244.4 579.3 250.0 582.6C255.6 585.8 250.8 584.5 254.5 588.2C258.3 592.0 256.0 593.1 261.3 593.9C266.6 594.6 264.7 593.1 270.4 590.5C276.0 587.9 273.0 591.6 278.3 586.0C283.6 580.3 280.9 582.2 286.2 573.5C291.5 564.8 289.6 567.5 294.2 559.9C298.7 552.4 297.8 556.9 299.8 550.9C301.9 544.8 301.4 547.1 300.3 541.8C299.1 536.5 297.0 538.4 296.4 535.0C295.9 531.6 293.8 533.5 298.7 531.6C303.6 529.7 304.0 532.4 311.1 529.4C318.3 526.3 314.5 526.6 320.2 522.6C325.9 518.6 322.8 516.6 328.1 517.4C333.4 518.1 331.9 517.8 336.1 524.8C340.2 531.8 339.4 529.7 340.6 538.4C341.7 547.1 341.3 542.2 339.4 550.9C337.6 559.6 337.6 554.6 334.9 564.5C332.3 574.3 333.4 571.2 331.5 580.3C329.6 589.4 329.4 584.8 329.3 591.6C329.1 598.4 328.8 596.5 331.1 600.7C333.3 604.8 331.4 603.9 336.1 604.1C340.7 604.2 339.4 602.3 345.1 601.1C350.8 600.0 349.4 598.6 353.0 600.7C356.7 602.8 354.8 602.7 356.0 607.5C357.1 612.2 355.5 607.9 356.4 615.0C357.3 622.0 356.8 622.0 358.7 628.6C360.6 635.2 359.1 633.2 362.1 634.7C365.1 636.2 364.0 636.7 367.8 633.1C371.5 629.6 370.4 630.1 373.4 624.1C376.4 618.0 374.5 623.5 376.8 615.0C379.1 606.5 376.4 606.2 380.2 598.4C384.0 590.6 385.3 599.9 388.1 591.6C390.9 583.3 389.0 584.1 388.6 573.5C388.2 562.9 386.4 569.0 387.0 559.9C387.6 550.9 390.0 553.9 390.4 546.3C390.8 538.8 389.6 544.1 388.1 537.3C386.6 530.5 389.6 532.8 385.9 526.0C382.1 519.2 380.6 523.7 376.8 516.9C373.0 510.1 377.2 511.6 374.5 505.6C371.9 499.5 372.7 500.3 368.9 498.8C365.1 497.3 367.4 499.7 363.2 501.1C359.1 502.4 361.0 503.6 356.4 502.9C351.9 502.1 354.9 502.8 349.6 498.8C344.4 494.8 347.4 495.4 340.6 490.9C333.8 486.3 336.8 488.2 329.3 485.2C321.7 482.2 325.5 485.0 317.9 481.8C310.4 478.6 313.4 481.0 306.6 475.7C299.8 470.4 304.3 471.8 297.6 466.0C290.8 460.1 292.3 463.7 286.2 458.0C280.2 452.4 283.4 455.8 279.4 449.0C275.5 442.2 276.0 445.2 274.5 437.6C272.9 430.1 276.3 433.9 274.9 426.3C273.6 418.8 273.0 418.8 270.4 415.0C267.7 411.2 268.5 422.7 267.0 415.0C265.5 407.2 267.4 405.4 265.9 391.6C264.3 377.8 265.1 382.6 262.5 373.5C259.8 364.5 262.1 368.2 257.9 364.5C253.8 360.7 252.6 362.9 250.0 362.2C247.4 361.4 257.1 362.9 250.0 362.2Z M159.6 415.0C160.3 412.8 158.1 411.5 163.0 408.6C167.9 405.7 166.8 408.8 174.4 406.3C181.9 403.9 178.1 401.1 185.7 401.1C193.2 401.1 188.7 405.0 197.0 406.3C205.3 407.7 201.5 404.1 210.6 405.2C219.7 406.3 217.4 406.5 224.2 409.7C231.0 413.0 225.7 411.7 231.0 415.0C236.3 418.2 233.7 416.9 240.0 419.5C246.4 422.2 245.9 420.7 250.0 422.9C254.1 425.2 251.5 419.2 252.3 426.3C253.0 433.5 251.9 434.6 252.3 444.4C252.6 454.3 250.4 449.7 253.4 455.8C256.4 461.8 254.9 457.3 261.3 462.6C267.7 467.8 265.1 465.6 272.6 471.6C280.2 477.7 276.8 476.1 284.0 480.7C291.1 485.2 289.6 481.0 294.2 485.2C298.7 489.4 297.2 487.8 297.6 493.1C297.9 498.4 297.9 496.5 295.3 501.1C292.6 505.6 294.9 505.4 289.6 506.7C284.3 508.1 285.5 504.7 279.4 505.1C273.4 505.5 274.7 503.9 271.5 507.8C268.3 511.8 269.9 510.1 269.9 516.9C269.9 523.7 272.5 523.5 271.5 528.2C270.5 532.9 269.8 528.3 267.0 530.9C264.2 533.6 264.6 531.4 263.1 536.2C261.6 540.9 264.2 540.5 262.5 545.2C260.7 550.0 262.1 548.5 257.9 550.4C253.8 552.3 256.7 548.8 250.0 550.9C243.3 552.9 244.1 552.4 237.8 556.5C231.4 560.7 235.5 559.8 231.0 563.3C226.4 566.9 228.3 566.4 224.2 567.2C220.0 567.9 221.9 568.0 218.5 565.6C215.1 563.2 215.5 565.6 214.0 559.9C212.5 554.3 212.1 556.2 214.0 548.6C215.9 541.1 216.4 544.1 219.7 537.3C222.9 530.5 223.0 533.9 223.7 528.2C224.5 522.6 224.8 524.8 221.9 520.3C219.1 515.8 220.0 516.5 215.1 514.6C210.2 512.8 212.1 512.4 207.2 514.6C202.3 516.9 204.9 517.3 200.4 521.4C195.9 525.6 198.5 524.8 193.6 527.1C188.7 529.4 190.6 529.0 185.7 528.2C180.8 527.5 183.0 529.4 178.9 524.8C174.7 520.3 176.4 522.2 173.2 514.6C170.1 507.1 169.8 510.5 169.4 502.2C169.0 493.9 172.0 498.0 172.1 489.7C172.3 481.4 172.9 484.1 169.8 477.3C166.8 470.5 167.6 473.9 163.0 469.3C158.5 464.8 162.3 466.0 156.2 463.7C150.2 461.4 151.7 464.4 144.9 462.6C138.1 460.7 140.8 458.9 135.9 458.0C131.0 457.1 133.6 460.2 130.2 459.8C126.8 459.5 127.7 459.8 125.7 456.9C123.6 454.0 123.7 456.1 124.1 451.2C124.5 446.3 125.0 448.2 126.8 442.2C128.6 436.1 128.0 438.8 129.5 433.1C131.0 427.5 128.5 428.1 131.3 425.2C134.2 422.3 133.6 424.1 138.1 424.5C142.7 424.9 139.6 427.2 144.9 426.3C150.2 425.4 148.7 424.4 154.0 421.8C159.3 419.2 158.4 420.7 160.8 418.4C163.2 416.1 161.6 416.1 161.2 415.0C160.9 413.9 159.0 417.1 159.6 415.0Z M0.0 798.7C3.7 800.1 3.7 799.8 11.2 803.1C18.6 806.5 14.9 804.6 22.4 808.7C29.8 812.8 29.1 809.8 33.5 815.4C38.0 821.0 33.2 818.4 35.8 825.5C38.4 832.6 36.9 829.2 41.4 836.7C45.8 844.1 42.9 841.1 49.2 847.8C55.5 854.6 52.2 852.7 60.4 856.8C68.6 860.9 64.8 860.1 73.8 860.1C82.7 860.1 79.8 860.5 87.2 856.8C94.7 853.1 91.3 854.6 96.2 849.0C101.0 843.4 98.4 844.3 101.7 840.0C105.1 835.8 102.1 838.2 106.2 836.2C110.3 834.2 107.0 834.4 114.0 834.0C121.1 833.5 114.8 833.8 127.5 834.9C140.1 836.0 140.9 838.6 152.1 837.3C163.2 836.1 154.3 835.8 161.0 831.1C167.7 826.4 165.5 828.8 172.2 823.3C178.9 817.7 175.2 818.4 181.1 814.3C187.1 810.2 184.5 810.2 190.1 811.0C195.7 811.7 193.4 811.0 197.9 816.5C202.4 822.1 198.6 820.3 203.5 827.7C208.3 835.2 206.8 833.8 212.4 838.9C218.0 844.0 212.8 840.3 220.3 842.9C227.7 845.5 224.9 844.3 234.8 846.7C244.7 849.1 242.3 848.2 250.0 850.1C257.7 851.9 253.8 847.8 257.9 852.3C262.0 856.8 258.8 854.8 262.4 863.5C265.9 872.2 266.5 873.5 268.6 878.5 M83.8 215.0C84.2 218.0 82.7 214.2 84.9 224.1C87.2 233.9 89.8 232.4 90.6 244.4C91.3 256.5 91.7 250.5 87.2 260.3C82.7 270.1 85.7 264.8 77.0 273.9C68.3 282.9 68.7 279.9 61.1 287.5C53.6 295.0 57.0 290.9 54.3 296.5C51.7 302.2 55.5 301.2 53.2 304.4C51.0 307.7 52.1 305.7 47.6 306.3C43.0 306.9 47.9 306.5 39.6 306.3C31.3 306.0 32.8 305.8 22.6 305.6C12.5 305.4 16.6 306.1 9.1 305.6C1.5 305.1 3.0 304.5 0.0 304.0 M106.4 215.0C106.8 218.8 106.1 218.8 107.6 226.3C109.1 233.9 110.6 229.3 111.0 237.6C111.3 245.9 110.2 242.9 108.7 251.2C107.2 259.5 111.0 254.3 106.4 262.6C101.9 270.9 104.2 267.1 95.1 276.1C86.1 285.2 87.2 282.2 79.3 289.7C71.3 297.3 74.2 292.7 71.3 298.8C68.5 304.8 69.5 301.8 70.7 307.8C71.8 313.9 73.7 310.9 74.7 316.9C75.7 322.9 75.9 321.4 73.6 326.0C71.3 330.5 73.6 330.5 67.9 330.5C62.3 330.5 66.0 329.4 56.6 326.0C47.2 322.6 51.0 322.0 39.6 320.3C28.3 318.6 32.8 320.6 22.6 321.0C12.5 321.4 16.6 321.8 9.1 321.4C1.5 321.1 3.0 320.4 0.0 319.8 M14.7 376.9C15.9 372.8 15.5 374.6 20.4 369.0C25.3 363.3 23.8 363.3 29.4 359.9C35.1 356.5 34.0 356.9 37.4 358.8C40.8 360.7 40.0 360.7 39.6 365.6C39.3 370.5 41.1 368.2 36.2 373.5C31.3 378.8 31.3 378.8 24.9 381.4C18.5 384.1 20.4 382.9 17.0 381.4C13.6 379.9 13.6 381.1 14.7 376.9Z M10.9 215.0C11.6 216.7 11.3 216.6 13.1 220.0C14.9 223.4 13.3 223.5 16.3 225.2C19.3 226.9 19.2 226.9 22.2 225.2C25.2 223.5 23.4 223.4 25.4 220.0C27.3 216.6 27.2 216.7 28.1 215.0 M0.0 391.6C1.4 393.1 2.9 391.6 4.1 396.2C5.2 400.7 4.8 399.9 3.4 405.2C2.0 410.5 1.1 409.7 0.0 412.0 M350.8 275.0C351.9 272.4 351.1 272.4 354.2 271.6C357.2 270.9 357.9 270.9 359.8 272.7C361.7 274.6 361.3 274.6 359.8 277.3C358.3 279.9 358.3 279.9 355.3 280.7C352.3 281.4 352.3 281.4 350.8 279.5C349.3 277.7 349.6 277.7 350.8 275.0Z M457.2 241.0C458.3 236.9 458.7 237.6 465.1 236.5C471.5 235.4 469.3 235.0 476.4 237.6C483.6 240.3 482.9 239.5 486.6 244.4C490.4 249.3 490.4 245.9 487.8 252.4C485.1 258.8 485.5 256.1 478.7 263.7C471.9 271.2 472.4 272.0 467.4 275.0C462.3 278.0 464.7 277.7 463.5 272.7C462.4 267.8 464.6 268.2 464.0 260.3C463.4 252.4 464.0 255.4 461.7 249.0C459.5 242.6 456.1 245.2 457.2 241.0Z M469.7 215.0C471.9 216.5 471.9 218.4 476.4 219.5C481.0 220.7 480.6 219.9 483.2 218.4C485.9 216.9 484.0 216.1 484.4 215.0 M495.7 215.0C497.5 217.3 498.7 215.8 501.3 221.8C504.0 227.8 504.0 225.9 503.6 233.1C503.2 240.3 500.6 238.9 500.2 243.3C499.8 247.7 498.3 245.5 502.5 246.2C506.6 247.0 504.7 246.9 512.6 245.6C520.6 244.2 516.8 244.4 526.2 242.2C535.7 239.9 533.4 238.4 541.0 238.8C548.5 239.2 543.6 241.6 548.9 243.3C554.2 245.0 553.8 242.5 556.8 244.0C559.8 245.5 559.7 245.4 557.9 247.8C556.2 250.3 553.5 248.2 551.6 251.2C549.7 254.3 548.7 254.3 552.3 256.9C555.9 259.5 555.7 256.5 562.5 259.2C569.3 261.8 569.0 259.5 572.7 264.8C576.3 270.1 572.4 269.0 573.3 275.0C574.3 281.0 573.2 282.2 575.6 282.9C578.0 283.7 575.9 280.7 580.6 277.3C585.3 273.9 582.1 275.5 589.6 272.7C597.2 270.0 596.1 270.0 603.2 268.9C610.4 267.8 607.2 267.7 611.2 269.3C615.1 271.0 614.6 269.7 615.0 273.9C615.4 278.0 614.3 276.9 612.3 281.8C610.2 286.7 609.3 284.4 608.9 288.6C608.5 292.7 608.5 291.8 611.2 294.3C613.8 296.7 611.5 296.8 616.8 296.1C622.1 295.3 622.6 295.6 627.0 292.0C631.4 288.4 628.7 290.1 629.9 285.2C631.2 280.3 629.2 280.4 630.9 277.3C632.5 274.1 631.3 274.6 634.9 275.7C638.6 276.8 636.4 276.7 641.7 280.7C647.0 284.6 644.7 282.6 650.8 287.5C656.8 292.4 656.4 290.9 659.8 295.4C663.2 299.9 661.1 297.3 661.0 301.1C660.8 304.8 658.3 303.3 659.4 306.7C660.5 310.1 662.3 307.1 664.4 311.2C666.4 315.4 663.6 315.9 665.5 319.2C667.4 322.4 667.0 321.7 670.0 321.0C673.0 320.2 670.4 318.4 674.6 316.9C678.7 315.4 677.2 315.7 682.5 316.4C687.8 317.2 685.9 318.4 690.4 319.2C694.9 319.9 691.2 317.4 696.1 318.7C701.0 320.1 699.1 320.7 705.1 323.2C711.2 325.8 708.9 324.8 714.2 326.4C719.5 328.1 716.8 325.4 721.0 328.2C725.1 331.1 723.2 331.2 726.6 335.0C730.0 338.8 728.9 336.2 731.2 339.5C733.4 342.9 732.5 341.1 733.4 345.2C734.4 349.4 733.9 349.7 734.1 352.0 M584.0 253.5C585.9 249.9 584.0 251.9 589.6 250.8C595.3 249.6 596.6 248.8 601.0 250.1C605.3 251.4 604.3 250.1 602.8 254.6C601.3 259.2 600.8 259.9 596.4 263.7C592.1 267.5 593.8 266.7 589.6 266.0C585.5 265.2 585.9 265.6 584.0 261.4C582.1 257.3 582.1 257.0 584.0 253.5Z M621.3 266.6C621.0 264.5 621.9 264.4 623.6 265.3C625.3 266.2 626.2 267.2 626.5 269.3C626.9 271.5 626.5 272.5 624.7 271.6C623.0 270.7 621.7 268.7 621.3 266.6Z M514.5 376.9C515.4 376.0 515.7 375.4 517.2 375.8C518.7 376.2 519.1 376.7 519.0 378.0C518.8 379.4 518.2 379.7 516.7 379.9C515.2 380.0 515.2 379.5 514.5 378.5C513.7 377.5 513.6 377.8 514.5 376.9Z M551.6 396.2C552.7 394.0 553.2 393.5 555.7 393.9C558.2 394.3 558.7 394.9 559.1 397.3C559.4 399.7 559.1 400.2 556.8 401.1C554.5 402.1 554.0 401.9 552.3 400.2C550.5 398.6 550.5 398.3 551.6 396.2Z M596.4 415.0C595.3 411.7 594.5 411.5 593.0 405.2C591.5 399.0 590.4 399.9 591.9 396.2C593.4 392.4 593.4 393.9 597.6 393.9C601.7 393.9 601.0 392.4 604.4 396.2C607.8 399.9 607.0 399.0 607.8 405.2C608.5 411.5 607.0 411.7 606.6 415.0 M638.3 215.0C641.0 216.9 641.3 218.0 646.2 220.7C651.2 223.3 650.0 219.9 653.0 222.9C656.1 225.9 653.4 226.5 655.3 229.7C657.2 233.0 656.6 232.7 658.7 232.7C660.8 232.7 660.1 232.6 661.6 229.7C663.2 226.9 660.8 227.5 663.2 224.1C665.6 220.7 663.2 222.2 668.9 219.5C674.6 216.9 676.4 217.3 680.2 216.1 M716.4 215.7C718.0 216.4 718.0 217.7 721.0 217.7C724.0 217.7 724.0 216.4 725.5 215.7 M78.1 564.5C83.8 561.1 82.7 562.9 90.6 561.1C98.5 559.2 94.4 560.7 101.9 558.8C109.5 556.9 108.3 555.0 113.2 555.4C118.1 555.8 114.5 555.0 116.6 559.9C118.7 564.8 119.9 562.6 119.6 570.1C119.2 577.7 118.4 573.9 115.5 582.6C112.6 591.3 115.1 589.2 111.0 596.2C106.8 603.1 109.8 600.5 103.0 603.4C96.2 606.3 97.8 605.3 90.6 604.8C83.4 604.2 86.4 605.8 81.5 601.8C76.6 597.8 78.9 599.6 75.9 592.8C72.8 586.0 73.2 588.6 72.5 581.4C71.7 574.3 71.7 576.9 73.6 571.2C75.5 565.6 72.5 567.9 78.1 564.5Z M0.0 441.0C1.9 441.8 2.8 440.3 5.7 443.3C8.5 446.3 8.6 444.8 8.6 450.1C8.6 455.4 8.2 453.6 5.7 459.2C3.2 464.7 2.6 464.1 1.1 466.6 M234.4 607.5C235.5 606.5 235.7 605.6 237.8 606.3C239.8 607.1 240.9 608.0 240.5 609.7C240.1 611.5 238.7 611.7 236.6 611.6C234.6 611.4 235.1 610.7 234.4 609.3C233.6 607.9 233.2 608.5 234.4 607.5Z M300.3 511.2C301.3 508.4 300.5 507.8 303.2 506.0C305.9 504.3 305.6 504.3 308.4 506.0C311.2 507.8 311.3 507.6 311.6 511.2C311.9 514.9 311.7 514.6 309.3 516.9C306.9 519.2 307.4 518.8 304.3 518.0C301.3 517.3 301.6 516.9 300.3 514.6C298.9 512.4 299.3 514.1 300.3 511.2Z M267.7 545.2C268.4 543.2 269.5 542.9 273.8 542.9C278.1 542.9 278.3 542.9 280.6 545.2C282.8 547.5 281.7 547.5 280.6 549.7C279.4 552.0 280.2 552.2 277.2 552.0C274.2 551.8 274.7 551.3 271.5 549.1C268.3 546.8 266.9 547.2 267.7 545.2Z M358.2 538.4C359.1 536.9 358.9 536.2 361.0 536.2C363.0 536.2 363.4 536.4 364.4 538.4C365.3 540.5 365.2 540.5 363.9 542.3C362.6 544.0 362.4 544.2 360.5 543.6C358.6 543.1 359.0 542.4 358.2 540.7C357.5 538.9 357.3 539.9 358.2 538.4Z M368.4 573.5C369.3 572.0 369.1 570.9 371.2 571.2C373.2 571.6 373.6 572.2 374.5 574.6C375.5 577.1 375.2 577.0 374.1 578.5C373.0 580.0 373.0 580.1 371.2 579.2C369.3 578.3 369.3 577.7 368.4 575.8C367.5 573.9 367.5 575.0 368.4 573.5Z M418.7 541.8C419.7 540.1 419.8 539.6 421.6 540.0C423.5 540.4 423.6 540.5 424.4 542.9C425.1 545.4 425.0 545.7 423.9 547.5C422.8 549.2 422.7 548.9 421.0 548.2C419.2 547.4 419.5 547.3 418.7 545.2C417.9 543.1 417.7 543.5 418.7 541.8Z M401.7 537.3C401.3 528.2 399.8 532.4 405.1 526.0C410.4 519.5 409.6 523.5 417.6 518.0C425.5 512.6 422.9 513.6 428.9 509.7C434.9 505.7 431.9 506.1 435.7 506.3C439.5 506.4 438.1 504.3 440.2 510.1C442.3 515.9 441.7 514.6 442.0 523.7C442.4 532.8 441.0 529.7 441.3 537.3C441.7 544.8 444.3 538.8 443.2 546.3C442.0 553.9 442.0 551.6 438.0 559.9C434.0 568.2 436.1 566.9 431.2 571.2C426.3 575.6 428.5 574.6 423.2 573.1C417.9 571.6 421.0 573.4 415.3 566.7C409.6 560.1 410.8 562.9 406.2 553.1C401.7 543.3 402.1 546.3 401.7 537.3Z M418.7 615.0C419.8 614.4 419.5 613.1 422.1 613.1C424.7 613.1 425.1 614.4 426.6 615.0 M456.1 615.0C457.2 614.2 457.2 612.7 459.5 612.7C461.7 612.7 461.7 614.2 462.9 615.0 M596.4 415.0C597.9 415.6 597.9 416.8 601.0 416.8C604.0 416.8 604.0 415.6 605.5 415.0 M130.2 638.8C131.7 633.3 131.0 635.2 135.9 632.7C140.8 630.2 138.5 630.0 144.9 631.3C151.3 632.6 149.7 632.5 155.1 636.5C160.6 640.5 159.3 637.6 161.2 643.3C163.1 649.0 162.8 647.5 160.8 653.5C158.7 659.5 160.0 658.4 155.1 661.4C150.2 664.4 152.1 664.1 146.1 662.6C140.0 661.0 141.9 661.4 137.0 656.9C132.1 652.4 133.6 655.0 131.3 649.0C129.1 642.9 128.7 644.2 130.2 638.8Z M183.4 815.0C185.7 813.8 185.7 811.6 190.2 811.6C194.7 811.6 194.7 813.8 197.0 815.0 M418.7 615.0C415.7 619.8 417.2 621.0 413.0 627.5C408.9 633.9 409.1 629.7 406.2 634.2C403.4 638.8 402.9 636.1 404.4 641.0C405.9 645.9 405.6 643.7 410.8 649.0C415.9 654.3 413.8 653.1 419.8 656.9C425.9 660.7 422.9 659.9 428.9 660.3C434.9 660.7 433.4 661.4 438.0 658.0C442.5 654.6 441.0 656.9 442.5 650.1C444.0 643.3 443.6 645.6 442.5 637.6C441.3 629.7 442.1 632.7 439.1 626.3C436.1 619.9 437.6 622.2 433.4 618.4C429.3 614.6 430.4 616.7 426.6 615.0C422.9 613.3 424.7 613.2 422.1 613.2C419.5 613.2 421.7 610.2 418.7 615.0Z M454.9 615.0C454.6 616.9 455.3 618.4 458.3 618.4C461.4 618.4 463.6 616.9 464.0 615.0C464.4 613.1 462.5 612.7 459.5 612.7C456.4 612.7 455.3 613.1 454.9 615.0Z M441.3 687.5C442.9 684.1 442.1 685.7 447.0 684.1C451.9 682.4 451.2 682.1 456.1 682.5C461.0 682.9 459.6 682.8 461.7 685.2C463.8 687.6 464.3 687.3 462.4 689.7C460.5 692.1 460.8 690.6 456.1 692.4C451.3 694.3 452.7 694.8 448.1 695.4C443.6 696.0 444.7 696.9 442.5 694.3C440.2 691.6 439.8 690.9 441.3 687.5Z M461.7 759.9C463.2 756.4 462.5 756.8 467.4 754.9C472.3 753.1 471.5 753.4 476.4 754.3C481.4 755.2 480.0 753.5 482.1 757.7C484.2 761.8 483.5 759.2 482.8 766.7C482.0 774.3 482.0 772.0 479.8 780.3C477.7 788.6 479.5 786.5 476.4 791.6C473.4 796.8 474.6 795.3 470.8 795.7C467.0 796.1 467.4 796.8 465.1 792.8C462.9 788.8 463.6 790.1 464.0 783.7C464.4 777.3 466.6 779.6 466.3 773.5C465.9 767.5 464.4 770.1 462.9 765.6C461.4 761.1 460.2 763.5 461.7 759.9Z M269.2 661.4C269.9 660.5 269.9 659.6 271.1 659.8C272.2 660.1 272.6 660.7 272.6 662.1C272.6 663.5 272.2 664.0 271.1 664.1C269.9 664.3 269.9 663.5 269.2 662.6C268.6 661.6 268.6 662.3 269.2 661.4Z M514.9 615.0C513.8 618.4 513.2 618.4 511.5 625.2C509.9 632.0 508.0 631.8 509.9 635.4C511.8 638.9 512.1 635.7 517.2 635.8C522.2 636.0 520.6 634.1 525.1 635.8C529.6 637.6 527.4 637.0 530.8 641.0C534.2 645.0 532.1 644.1 535.3 647.8C538.5 651.6 536.9 652.7 540.3 652.4C543.7 652.0 542.6 650.5 545.5 646.7C548.3 642.9 548.3 645.2 548.9 641.0C549.4 636.9 549.0 638.8 547.1 634.2C545.2 629.7 546.4 631.6 543.2 627.5C540.0 623.3 539.1 625.9 537.6 621.8C536.0 617.6 539.4 617.6 538.7 615.0C537.9 612.4 539.4 614.8 535.3 613.9C531.1 612.9 530.0 614.2 526.2 612.1C522.5 609.9 525.5 610.9 524.0 607.5C522.5 604.1 523.8 601.9 521.7 601.9C519.6 601.9 519.1 603.1 517.6 607.5C516.1 611.9 517.3 612.5 517.2 615.0 M492.3 655.8C493.8 653.5 493.4 654.3 496.8 651.2C500.2 648.2 497.9 648.4 502.5 646.7C507.0 645.0 507.0 645.3 510.4 646.2C513.8 647.2 514.2 647.0 512.6 649.4C511.1 651.8 510.8 651.0 505.9 653.5C500.9 656.0 501.9 654.8 497.9 656.9C494.0 659.0 496.0 659.5 494.1 659.8C492.2 660.2 492.9 659.4 492.3 658.0C491.7 656.7 490.8 658.0 492.3 655.8Z M605.0 637.6C605.8 636.3 605.5 636.0 607.8 635.8C610.0 635.7 610.5 635.7 611.8 637.2C613.2 638.7 613.0 638.9 611.8 640.4C610.6 641.9 610.3 641.9 608.2 641.7C606.1 641.6 606.5 641.3 605.5 639.9C604.4 638.6 604.3 639.0 605.0 637.6Z M505.9 721.4C507.5 717.7 506.2 719.9 510.4 715.8C514.5 711.6 513.0 715.0 518.3 709.0C523.6 702.9 521.3 704.8 526.2 697.7C531.1 690.5 527.4 692.6 533.0 687.5C538.7 682.3 536.8 683.2 543.2 682.3C549.6 681.3 547.1 682.3 552.3 684.7C557.4 687.2 557.5 685.0 558.6 689.7C559.7 694.4 557.8 692.0 555.7 698.8C553.6 705.6 555.7 704.4 552.3 710.1C548.9 715.8 550.0 712.4 545.5 715.8C541.0 719.2 542.5 716.1 538.7 720.3C534.9 724.5 537.9 722.9 534.2 728.2C530.4 733.5 533.0 733.4 527.4 736.2C521.7 738.9 523.2 737.7 517.2 736.6C511.1 735.5 513.2 735.9 509.2 732.8C505.3 729.6 506.5 730.9 505.4 727.1C504.3 723.3 504.2 725.2 505.9 721.4Z M532.6 800.7C533.7 797.8 532.9 797.7 536.4 796.6C540.0 795.5 539.8 795.6 543.2 797.3C546.6 799.0 546.6 798.4 546.6 801.8C546.6 805.2 546.2 805.2 543.2 807.5C540.2 809.7 541.0 809.4 537.6 808.6C534.2 807.9 534.7 807.9 533.0 805.2C531.4 802.6 531.4 803.6 532.6 800.7Z M0.0 808.7C4.5 810.6 4.5 809.8 13.4 814.3C22.4 818.8 19.4 814.7 26.8 822.1C34.3 829.6 29.8 826.6 35.8 836.7C41.7 846.7 38.0 843.4 44.7 852.3C51.4 861.3 47.7 858.3 55.9 863.5C64.1 868.7 59.6 866.6 69.3 868.0C79.0 869.3 76.0 869.8 85.0 867.5C93.9 865.3 89.4 866.3 96.2 861.3C102.9 856.2 100.3 856.4 105.1 852.3C109.9 848.2 107.0 849.7 110.7 849.0C114.4 848.2 112.6 848.2 116.3 850.1C120.0 851.9 117.8 852.3 121.9 854.6C126.0 856.8 126.0 853.8 128.6 856.8C131.2 859.8 127.8 860.1 129.7 863.5C131.6 866.9 129.7 866.9 134.2 866.9C138.6 866.9 138.6 863.5 143.1 863.5C147.6 863.5 144.6 863.5 147.6 866.9C150.6 870.2 149.1 871.1 152.1 873.6C155.0 876.0 153.9 875.7 156.5 874.2C159.1 872.7 159.1 874.2 159.9 869.1C160.6 864.0 157.6 863.9 158.8 859.0C159.9 854.2 160.3 858.3 163.2 854.6C166.2 850.8 164.7 850.6 167.7 847.8C170.7 845.1 168.5 846.3 172.2 846.3C175.9 846.3 174.4 844.7 178.9 847.8C183.4 851.0 180.4 853.1 185.6 855.7C190.8 858.3 189.0 856.0 194.5 855.7C200.1 855.3 197.2 853.8 202.4 854.6C207.6 855.3 204.6 854.9 210.2 857.9C215.8 860.9 213.9 860.5 219.1 863.5C224.4 866.5 222.5 863.9 225.8 866.9C229.2 869.8 228.5 867.1 229.2 872.4C229.9 877.8 228.5 879.5 228.1 883.0 M750.0 215.0C751.0 216.0 750.7 215.7 753.0 218.0C755.3 220.3 755.7 220.7 757.0 222.0 M934.0 215.0C935.3 216.0 935.0 215.7 938.0 218.0C941.0 220.3 941.3 220.7 943.0 222.0 M1050.0 215.0C1051.0 216.3 1051.0 216.7 1053.0 219.0C1055.0 221.3 1055.0 221.0 1056.0 222.0 M1095.0 246.0C1096.0 246.3 1096.3 246.7 1098.0 247.0C1099.7 247.3 1099.3 247.0 1100.0 247.0 M1095.0 392.0C1096.0 391.3 1096.3 391.0 1098.0 390.0C1099.7 389.0 1099.3 389.3 1100.0 389.0"/>
<path fill="none" stroke="#000" stroke-width="1.6" stroke-linejoin="round" stroke-linecap="round" d="M225.3 296.5C226.6 294.3 224.9 293.5 228.7 297.7C232.5 301.8 235.1 303.9 236.6 309.0C238.1 314.0 236.3 311.7 233.2 312.8C230.2 314.0 230.4 315.2 227.6 312.4C224.8 309.6 225.6 309.7 224.9 304.4C224.1 299.2 224.0 298.8 225.3 296.5Z M337.2 400.7C337.6 396.9 337.6 399.2 339.4 393.9C341.3 388.6 339.4 389.4 342.8 384.8C346.2 380.3 343.6 382.4 349.6 380.3C355.7 378.2 354.2 378.5 361.0 378.5C367.8 378.5 364.7 378.6 370.0 380.3C375.3 382.0 373.0 381.1 376.8 383.7C380.6 386.3 380.6 384.8 381.3 388.2C382.1 391.6 381.7 391.1 379.1 393.9C376.4 396.7 379.5 396.0 373.4 396.6C367.4 397.2 367.0 395.1 361.0 395.7C354.9 396.3 359.1 395.3 355.3 398.4C351.5 401.6 353.8 402.2 349.6 405.2C345.5 408.2 346.6 407.5 342.8 407.5C339.1 407.5 340.2 407.5 338.3 405.2C336.4 403.0 336.8 404.5 337.2 400.7Z M437.5 476.1C437.9 472.4 437.0 472.2 439.1 469.3C441.1 466.5 440.2 466.0 443.6 467.5C447.0 469.0 446.5 469.9 449.3 473.9C452.1 477.9 452.4 475.8 452.0 479.5C451.6 483.3 451.3 483.3 448.1 485.2C445.0 487.1 445.9 486.7 442.5 485.2C439.1 483.7 439.6 483.7 438.0 480.7C436.3 477.7 437.1 479.9 437.5 476.1Z M458.8 479.5C459.2 475.8 461.1 478.0 466.3 473.9C471.4 469.7 468.5 469.2 474.2 467.1C479.8 465.0 478.7 465.3 483.2 467.5C487.8 469.8 487.8 469.5 487.8 473.9C487.8 478.3 488.1 475.5 483.2 480.7C478.3 485.8 479.1 487.8 473.1 489.3C467.0 490.8 469.9 488.4 465.1 485.2C460.4 482.0 458.4 483.3 458.8 479.5Z M480.5 446.7C480.5 445.0 481.4 444.3 483.2 444.4C485.1 444.6 486.0 445.5 486.0 447.2C486.0 448.8 485.1 449.6 483.2 449.4C481.4 449.3 480.5 448.4 480.5 446.7Z M473.1 544.1C473.8 542.0 472.3 540.8 476.4 542.3C480.6 543.8 478.7 546.3 485.5 548.6C492.3 550.9 490.8 549.1 496.8 549.3C502.9 549.4 500.9 548.3 503.6 549.1C506.3 549.8 506.5 550.0 505.0 551.5C503.5 553.1 504.8 551.9 499.1 553.6C493.4 555.2 493.8 555.9 487.8 556.5C481.7 557.1 485.5 558.0 481.0 555.4C476.4 552.8 476.8 552.4 474.2 548.6C471.5 544.8 472.3 546.2 473.1 544.1Z M505.4 564.5C506.3 562.7 506.0 562.6 507.7 562.6C509.3 562.6 509.9 562.0 510.4 564.5C510.9 566.9 510.6 567.9 509.2 570.1C507.9 572.4 507.7 572.0 506.3 571.2C504.9 570.5 505.2 570.1 504.9 567.9C504.6 565.6 504.5 566.2 505.4 564.5Z M23.8 721.4C25.4 717.7 25.7 719.5 29.4 720.3C33.2 721.1 32.8 720.3 35.1 723.7C37.4 727.1 37.0 726.3 36.2 730.5C35.5 734.6 35.9 733.9 32.8 736.2C29.8 738.4 30.0 738.8 27.2 737.3C24.4 735.8 25.6 736.9 24.5 731.6C23.3 726.3 22.1 725.2 23.8 721.4Z M146.7 718.0C146.7 714.0 147.4 714.0 150.6 711.2C153.8 708.4 153.8 708.5 156.2 709.7C158.7 710.8 158.2 710.7 158.1 714.6C157.9 718.6 158.3 718.6 155.8 721.4C153.3 724.3 153.6 724.4 150.6 723.2C147.6 722.1 146.7 722.0 146.7 718.0Z M219.7 747.5C219.7 742.0 220.0 742.3 225.3 740.0C230.6 737.7 229.5 738.9 235.5 740.7C241.5 742.4 241.5 741.1 243.4 745.2C245.3 749.4 245.3 747.9 241.2 753.1C237.0 758.4 236.3 759.9 231.0 761.1C225.7 762.2 229.1 761.1 225.3 756.5C221.5 752.0 219.7 753.0 219.7 747.5Z M73.6 806.3C74.4 803.3 75.5 803.3 77.0 798.4C78.5 793.5 75.5 795.0 78.1 791.6C80.8 788.2 82.7 792.8 84.9 788.2C87.2 783.7 84.2 783.3 84.9 778.0C85.7 772.8 84.2 774.6 87.2 772.4C90.2 770.1 90.2 770.5 94.0 771.2C97.8 772.0 96.6 770.1 98.5 774.6C100.4 779.2 98.1 779.3 99.6 784.8C101.1 790.3 98.9 789.5 103.0 791.2C107.2 792.8 107.2 789.3 112.1 789.8C117.0 790.3 115.9 790.3 117.8 792.8C119.6 795.3 119.3 793.1 117.8 797.3C116.2 801.4 115.9 801.8 113.2 805.2C110.6 808.6 114.4 807.6 109.8 807.5C105.3 807.3 106.8 806.3 99.6 804.8C92.5 803.3 94.7 803.2 88.3 803.0C81.9 802.7 84.9 802.6 80.4 804.1C75.9 805.6 77.0 806.7 74.7 807.5C72.5 808.2 72.8 809.4 73.6 806.3Z M313.9 685.2C314.4 683.4 314.5 683.2 316.8 682.5C319.1 681.7 318.9 681.7 320.7 682.9C322.4 684.2 322.5 684.4 322.0 686.3C321.5 688.2 321.3 688.1 319.1 688.6C316.8 689.1 317.0 689.0 315.2 687.9C313.5 686.8 313.3 687.0 313.9 685.2Z M308.4 688.6C308.4 687.8 308.7 687.5 309.3 687.5C310.0 687.5 310.5 687.8 310.5 688.6C310.5 689.4 310.0 689.7 309.3 689.7C308.7 689.7 308.4 689.4 308.4 688.6Z M290.8 710.1C291.1 705.8 291.1 707.8 293.0 707.4C294.9 707.0 294.9 706.2 296.4 709.0C297.9 711.8 297.9 711.5 297.6 715.8C297.2 720.1 297.2 720.4 295.3 721.9C293.4 723.4 293.4 724.2 291.9 720.3C290.4 716.4 290.4 714.4 290.8 710.1Z M347.8 716.9C348.7 714.0 349.0 712.4 351.9 712.4C354.8 712.4 354.3 714.3 356.4 716.9C358.5 719.5 359.4 718.4 358.2 720.3C357.1 722.2 356.1 722.3 353.0 722.6C350.0 722.8 350.9 722.9 349.2 721.0C347.4 719.1 346.9 719.8 347.8 716.9Z M647.4 726.0C648.4 724.8 648.3 724.4 650.3 724.4C652.4 724.4 652.6 724.5 653.5 726.0C654.4 727.5 654.3 727.6 653.0 728.9C651.8 730.2 651.5 730.2 649.6 729.8C647.8 729.4 648.1 729.1 647.4 727.8C646.6 726.5 646.4 727.1 647.4 726.0Z M622.7 712.8C622.7 712.2 623.0 711.9 623.6 711.9C624.2 711.9 624.5 712.2 624.5 712.8C624.5 713.4 624.2 713.7 623.6 713.7C623.0 713.7 622.7 713.4 622.7 712.8Z M54.8 877.6C56.6 876.6 56.3 875.3 60.4 874.7C64.5 874.1 64.0 874.7 67.1 875.8C70.2 876.9 68.9 877.3 69.8 878.0 M19.0 878.0C20.1 877.7 20.3 877.0 22.4 876.9C24.4 876.8 24.2 877.5 25.0 877.8 M206.8 877.4C208.3 876.8 208.9 875.6 211.3 875.8C213.7 876.0 213.1 877.3 214.0 878.0 M333.5 842.3C334.2 839.3 333.4 839.1 336.2 836.7C338.9 834.2 338.8 834.5 341.7 834.9C344.7 835.3 344.7 835.0 345.1 837.8C345.5 840.6 345.1 840.2 342.9 843.4C340.6 846.6 341.4 846.7 338.4 847.4C335.4 848.1 335.6 847.3 333.9 845.6C332.3 843.9 332.7 845.2 333.5 842.3Z"/>
<path fill="none" stroke="#000" stroke-width="1.85" stroke-linejoin="round" stroke-linecap="round" d="M369.7 878.5C370.8 877.2 369.7 877.4 373.1 874.7C376.4 871.9 376.4 874.3 379.8 870.2C383.1 866.1 383.1 866.9 383.1 862.4C383.1 857.9 383.5 860.1 379.8 856.8C376.0 853.4 376.4 856.8 371.9 852.3C367.5 847.8 369.0 849.3 366.3 843.4C363.7 837.4 366.0 840.8 364.1 834.4C362.2 828.1 363.5 830.0 360.8 824.4C358.0 818.8 357.6 820.8 355.8 817.7C354.0 814.5 353.6 817.6 355.3 815.0C357.0 812.3 357.2 814.5 361.0 809.7C364.7 805.0 363.6 807.5 366.6 800.7C369.6 793.9 369.0 795.8 370.0 789.4C371.0 782.9 371.5 786.3 369.6 781.4C367.7 776.5 368.0 778.0 364.4 774.6C360.7 771.2 361.9 773.9 358.7 771.2C355.4 768.6 355.5 771.2 354.6 766.7C353.7 762.2 355.8 763.7 356.0 757.7C356.2 751.6 356.3 753.7 355.3 748.6C354.3 743.5 356.4 744.5 353.0 742.3C349.6 740.0 350.8 740.8 345.1 741.8C339.4 742.8 340.6 742.2 336.1 745.2C331.5 748.2 334.9 747.1 331.5 750.9C328.1 754.6 330.8 752.8 325.9 756.5C321.0 760.3 321.3 758.0 316.8 762.2C312.3 766.3 315.7 765.2 312.3 769.0C308.9 772.8 310.8 772.2 306.6 773.5C302.5 774.9 304.3 774.4 299.8 773.1C295.3 771.7 298.3 771.2 293.0 769.4C287.7 767.7 288.5 769.9 284.0 767.9C279.4 765.8 280.9 767.5 279.4 763.3C277.9 759.2 277.9 759.9 279.4 755.4C280.9 750.9 279.4 751.9 284.0 749.7C288.5 747.6 286.6 750.6 293.0 749.1C299.4 747.5 296.4 748.4 303.2 745.2C310.0 742.0 308.5 743.3 313.4 739.5C318.3 735.8 316.8 738.0 317.9 733.9C319.1 729.7 316.8 731.1 316.8 727.1C316.8 723.1 314.9 724.5 317.9 721.9C321.0 719.2 321.7 721.6 325.9 719.2C330.0 716.8 328.7 719.5 330.4 714.6C332.1 709.7 329.6 709.4 331.1 704.4C332.6 699.5 332.9 703.7 334.9 699.9C337.0 696.1 336.8 698.0 337.2 693.1C337.6 688.2 338.3 689.7 336.1 685.2C333.8 680.7 333.4 683.7 330.4 679.5C327.4 675.4 329.6 676.7 327.0 672.7C324.4 668.7 326.6 668.8 322.5 667.5C318.3 666.3 319.8 669.2 314.5 668.9C309.3 668.6 312.3 666.5 306.6 666.6C301.0 666.8 302.5 666.9 297.6 669.3C292.6 671.8 294.2 669.3 291.9 673.9C289.6 678.4 292.6 677.7 290.8 682.9C288.9 688.2 290.0 686.6 286.2 689.7C282.5 692.9 284.0 693.2 279.4 692.4C274.9 691.7 277.2 691.8 272.6 687.5C268.1 683.2 271.1 684.4 265.9 679.5C260.6 674.6 262.1 677.0 256.8 672.7C251.5 668.4 253.5 671.5 250.0 666.6C246.5 661.7 248.3 664.7 246.4 658.0C244.4 651.4 247.0 651.4 244.1 646.7C241.2 642.0 242.9 643.6 237.8 644.0C232.6 644.4 233.2 643.9 228.7 647.8C224.2 651.8 226.4 649.7 224.2 655.8C221.9 661.8 223.8 659.9 221.9 666.0C220.0 672.0 221.9 671.6 218.5 673.9C215.1 676.1 216.3 674.6 211.7 672.7C207.2 670.9 209.1 672.4 204.9 668.2C200.8 664.1 201.5 666.0 199.3 660.3C197.0 654.6 199.7 656.5 198.1 651.2C196.6 645.9 196.3 649.3 194.7 644.4C193.2 639.5 195.9 639.9 193.6 636.5C191.3 633.1 191.0 633.9 188.0 634.2C184.9 634.6 186.8 632.7 184.6 637.6C182.3 642.6 183.4 641.4 181.2 649.0C178.9 656.5 179.6 651.6 177.8 660.3C175.9 669.0 177.8 666.7 175.5 675.0C173.2 683.3 174.7 679.5 171.0 685.2C167.2 690.9 168.3 690.1 164.2 692.0C160.0 693.9 163.0 693.5 158.5 690.9C154.0 688.2 155.1 689.0 150.6 684.1C146.1 679.2 149.8 681.0 144.9 676.1C140.0 671.2 142.3 673.9 135.9 669.3C129.5 664.8 131.3 667.5 125.7 662.6C120.0 657.6 120.9 660.7 118.9 654.6C116.8 648.6 119.9 650.5 119.6 644.4C119.2 638.4 120.2 640.3 117.8 636.5C115.3 632.7 117.0 633.3 112.1 633.1C107.2 632.9 109.1 632.4 103.0 635.8C97.0 639.2 99.6 636.7 94.0 643.3C88.3 649.9 91.7 646.3 86.1 655.8C80.4 665.2 83.8 662.6 77.0 671.6C70.2 680.7 72.8 677.8 65.7 682.9C58.5 688.1 62.3 687.4 55.5 687.0C48.7 686.6 51.6 685.6 45.3 681.8C39.0 678.0 38.2 680.6 36.7 675.7C35.2 670.8 39.3 674.5 40.8 667.1C42.3 659.7 41.6 662.2 41.2 653.5C40.8 644.8 42.0 648.6 39.6 641.0C37.2 633.5 36.8 637.3 34.0 630.9C31.2 624.4 31.2 627.1 31.2 621.8C31.2 616.5 32.5 620.5 34.0 615.0C35.5 609.5 36.2 611.5 35.8 605.2C35.4 598.9 32.7 602.2 32.8 596.2C33.0 590.1 35.5 594.6 36.2 587.1C37.0 579.6 34.7 580.3 35.1 573.5C35.5 566.7 33.2 574.3 37.4 566.7C41.5 559.2 43.8 559.6 47.6 550.9C51.3 542.2 46.8 545.2 48.7 540.7C50.6 536.2 49.1 538.0 53.2 537.3C57.4 536.5 55.9 540.7 61.1 538.4C66.4 536.2 65.9 538.4 69.1 530.5C72.2 522.6 72.9 525.2 70.7 514.6C68.4 504.1 70.0 510.1 62.3 498.8C54.6 487.5 55.9 491.2 47.6 480.7C39.3 470.1 41.1 477.7 37.4 467.1C33.6 456.5 40.4 458.8 36.2 449.0C32.1 439.2 29.8 444.1 24.9 437.6C20.0 431.2 21.9 435.0 21.5 429.7C21.1 424.4 20.8 426.7 23.8 421.8C26.8 416.9 23.4 419.2 30.6 415.0C37.7 410.8 36.6 414.1 45.3 409.3C54.0 404.5 52.5 405.4 56.6 400.7C60.8 395.9 58.1 399.6 57.7 395.0C57.4 390.5 54.3 392.4 55.5 387.1C56.6 381.8 54.0 382.0 61.1 379.2C68.3 376.3 67.2 379.5 77.0 378.5C86.8 377.5 82.7 378.6 90.6 376.2C98.5 373.8 96.2 375.2 100.8 371.2C105.3 367.3 105.1 368.6 104.2 364.5C103.2 360.3 97.4 363.3 97.8 358.8C98.2 354.3 99.9 355.8 105.3 350.9C110.7 346.0 112.8 348.6 113.9 344.1C115.0 339.5 112.7 342.6 108.7 337.3C104.7 332.0 104.9 336.5 101.9 328.2C98.9 319.9 99.3 322.2 99.6 312.4C100.0 302.6 99.3 307.8 103.0 298.8C106.8 289.7 104.5 293.5 111.0 285.2C117.4 276.9 112.5 279.2 122.3 273.9C132.1 268.6 128.3 272.0 140.4 269.3C152.5 266.7 146.8 268.6 158.5 266.0C170.2 263.3 168.7 264.8 175.5 261.4C182.3 258.0 177.4 259.9 178.9 255.8C180.4 251.6 177.8 252.0 180.0 249.0C182.3 245.9 181.5 246.3 185.7 246.7C189.8 247.1 190.2 246.3 192.5 250.1C194.7 253.9 191.0 252.7 192.5 258.0C194.0 263.3 192.5 261.4 197.0 266.0C201.5 270.5 198.9 269.7 206.1 271.6C213.2 273.5 212.9 269.7 218.5 271.6C224.2 273.5 220.8 273.7 223.1 277.3C225.3 280.9 221.9 283.2 225.3 282.5C228.7 281.7 227.6 278.6 233.2 275.0C238.9 271.4 236.7 270.9 242.3 271.6C247.9 272.4 245.5 272.0 250.0 277.3C254.5 282.6 252.6 280.3 255.7 287.5C258.7 294.6 258.3 292.0 259.1 298.8C259.8 305.6 260.2 302.2 257.9 307.8C255.7 313.5 252.6 310.9 252.3 315.8C251.9 320.7 251.9 316.9 256.8 322.6C261.7 328.2 262.5 326.3 267.0 332.8C271.5 339.2 267.7 334.3 270.4 341.8C273.0 349.4 272.6 344.8 274.9 355.4C277.2 366.0 275.3 359.9 277.2 373.5C279.1 387.1 277.9 382.3 280.6 396.2C283.2 410.0 282.1 406.0 285.1 415.0C288.1 423.9 286.2 418.0 289.6 422.9C293.0 427.8 292.6 424.1 295.3 429.7C297.9 435.4 294.5 434.6 297.6 439.9C300.6 445.2 299.4 442.6 304.3 445.6C309.3 448.6 307.7 445.7 312.3 449.0C316.8 452.2 314.5 453.6 317.9 455.3C321.3 457.0 319.1 452.7 322.5 453.9C325.9 455.2 322.1 455.5 328.1 459.2C334.2 462.8 332.7 461.6 340.6 464.8C348.5 468.0 344.7 466.4 351.9 468.7C359.1 470.9 357.2 468.4 362.1 471.6C367.0 474.9 362.8 474.3 366.6 478.4C370.4 482.6 367.8 481.0 373.4 484.1C379.1 487.1 376.4 486.5 383.6 487.5C390.8 488.4 388.1 487.8 394.9 487.0C401.7 486.3 401.0 487.3 404.0 485.2C407.0 483.1 405.1 484.4 404.0 480.7C402.9 476.9 401.9 479.2 400.6 473.9C399.3 468.6 399.4 470.9 400.1 464.8C400.9 458.8 400.1 461.8 402.9 455.8C405.6 449.7 403.6 452.0 408.5 446.7C413.4 441.4 411.5 443.7 417.6 439.9C423.6 436.1 420.6 437.3 426.6 435.4C432.7 433.5 429.6 434.2 435.7 434.2C441.7 434.2 439.8 432.7 444.7 435.4C449.7 438.0 447.0 437.5 450.4 442.2C453.8 446.9 451.2 448.7 454.9 449.4C458.7 450.2 457.6 445.3 461.7 444.4C465.9 443.5 463.6 442.9 467.4 446.7C471.2 450.5 468.5 452.7 473.1 455.8C477.6 458.8 476.4 453.5 481.0 455.8C485.5 458.0 482.5 458.6 486.6 462.6C490.8 466.5 489.0 465.3 493.4 467.5C497.9 469.8 501.1 469.5 500.0 469.3C498.9 469.2 490.7 467.1 490.0 467.1C489.3 467.1 493.8 465.6 497.9 469.3C502.1 473.1 497.5 472.4 502.5 478.4C507.4 484.4 506.6 480.7 512.6 487.5C518.7 494.3 516.4 492.0 520.6 498.8C524.7 505.6 520.2 501.8 525.1 507.8C530.0 513.9 530.4 512.0 535.3 516.9C540.2 521.8 538.2 518.8 539.8 522.6C541.5 526.3 538.8 525.0 540.3 528.2C541.8 531.5 541.3 531.4 544.3 532.3C547.4 533.2 547.7 532.9 549.3 530.9C551.0 529.0 550.8 529.4 549.3 526.4C547.9 523.4 546.8 524.5 545.0 521.9C543.2 519.3 542.8 520.1 543.9 518.7C545.0 517.3 544.5 515.2 548.4 517.6C552.3 520.0 550.6 522.4 555.7 526.0C560.7 529.5 559.4 525.6 563.6 528.2C567.7 530.9 566.2 527.8 568.1 533.9C570.0 539.9 567.7 539.9 569.3 546.3C570.8 552.8 568.9 547.9 572.7 553.1C576.4 558.4 575.7 556.2 580.6 562.2C585.5 568.2 583.2 565.2 587.4 571.2C591.5 577.3 589.3 574.6 593.0 580.3C596.8 586.0 594.9 584.1 598.7 588.2C602.5 592.4 599.8 592.0 604.4 592.8C608.9 593.5 606.6 589.0 612.3 590.5C617.9 592.0 615.3 592.0 621.3 597.3C627.4 602.6 624.7 600.5 630.4 606.3C636.1 612.2 633.8 610.6 638.3 615.0C642.9 619.3 639.1 617.6 644.0 619.5C648.9 621.4 647.0 618.0 653.0 620.7C659.1 623.3 655.3 622.9 662.1 627.5C668.9 632.0 666.6 629.3 673.4 634.2C680.2 639.2 678.7 635.8 682.5 642.2C686.3 648.6 681.7 647.1 684.7 653.5C687.8 659.9 687.0 655.4 691.5 661.4C696.1 667.5 693.8 663.7 698.3 671.6C702.9 679.5 702.3 676.1 705.1 685.2C708.0 694.3 705.8 690.5 706.9 698.8C708.1 707.1 706.1 706.0 708.5 710.1C710.9 714.3 709.3 711.1 714.2 711.2C719.1 711.4 718.0 709.1 723.2 710.6C728.5 712.1 726.3 712.9 730.0 715.8C733.8 718.6 733.1 718.0 734.6 719.2 M635.3 878.0C633.5 876.2 634.2 874.9 629.8 872.4C625.3 870.0 626.8 872.3 621.9 870.7C617.1 869.0 619.7 870.3 615.2 867.5C610.8 864.8 613.4 863.0 608.5 862.4C603.7 861.8 605.9 865.4 600.7 865.7C595.5 866.1 598.5 866.1 592.9 863.5C587.3 860.9 589.9 862.4 583.9 857.9C578.0 853.4 580.6 854.6 575.0 850.1C569.4 845.6 568.6 849.7 567.1 844.5C565.7 839.3 570.0 841.5 570.5 834.4C571.0 827.4 568.7 830.7 568.7 823.3C568.7 815.8 570.1 821.0 570.5 812.1C570.9 803.1 570.1 806.1 570.1 796.4C570.1 786.7 569.3 790.6 570.5 783.0C571.7 775.4 572.5 779.7 573.8 773.5C575.0 767.3 576.5 769.4 574.2 764.5C572.0 759.6 572.4 763.1 567.0 758.8C561.6 754.5 563.2 754.3 557.9 751.5C552.7 748.8 556.0 749.9 551.1 750.4C546.2 750.9 547.4 753.4 543.2 753.1C539.1 752.9 540.4 752.8 538.7 749.7C537.0 746.7 536.5 748.2 538.0 744.1C539.5 739.9 539.2 741.2 543.2 737.3C547.2 733.4 545.5 734.0 550.0 732.3C554.5 730.6 552.3 730.6 556.8 732.3C561.3 734.0 557.6 735.2 563.6 737.3C569.6 739.3 568.5 736.8 574.9 738.4C581.3 740.1 577.2 740.8 582.8 742.3C588.5 743.8 586.2 742.2 591.9 742.9C597.6 743.7 595.7 742.6 599.8 744.5C604.0 746.4 601.6 748.0 604.4 748.6C607.1 749.2 605.9 749.4 608.2 746.3C610.5 743.3 607.9 744.1 611.2 739.5C614.4 735.0 613.0 735.9 617.9 732.8C622.9 729.6 620.2 732.3 625.9 730.0C631.5 727.8 629.3 730.0 634.9 726.0C640.6 722.0 638.7 721.8 642.9 718.0C647.0 714.3 644.6 718.8 647.4 714.6C650.2 710.5 648.6 710.0 651.2 705.6C653.9 701.2 652.6 702.4 655.3 701.5C658.0 700.6 657.0 699.2 659.4 702.9C661.8 706.5 660.1 706.2 662.6 712.4C665.0 718.6 665.1 715.4 666.6 721.4C668.1 727.5 667.8 725.2 667.1 730.5C666.3 735.8 665.4 732.4 664.4 737.3C663.3 742.2 666.2 740.7 663.9 745.2C661.6 749.7 660.8 746.7 657.6 750.9C654.3 755.0 654.6 751.6 654.2 757.7C653.8 763.7 655.7 761.4 656.4 769.0C657.2 776.5 657.6 773.5 656.4 780.3C655.3 787.1 654.6 783.3 653.0 789.4C651.5 795.4 653.6 793.9 651.9 798.4C650.3 803.0 648.8 799.6 648.1 803.0C647.3 806.3 646.5 806.2 649.6 808.6C652.8 811.0 651.9 810.6 657.6 810.2C663.2 809.8 660.6 810.7 666.6 807.5C672.7 804.3 671.9 806.0 675.7 800.7C679.5 795.4 675.7 797.7 678.0 791.6C680.2 785.6 678.7 788.0 682.5 782.6C686.3 777.1 684.6 778.2 689.3 775.3C694.0 772.5 692.7 772.3 696.5 774.0C700.3 775.6 697.4 775.2 700.6 780.3C703.8 785.4 702.1 783.7 706.3 789.4C710.4 795.0 709.7 792.8 713.1 797.3C716.4 801.8 716.3 798.4 716.4 803.0C716.6 807.5 717.5 806.8 713.6 811.0C709.7 815.1 711.4 813.6 704.7 815.4C698.0 817.3 700.2 813.9 693.5 816.5C686.8 819.2 689.8 818.0 684.5 823.3C679.3 828.5 681.9 826.6 677.8 832.2C673.7 837.8 674.3 834.8 672.2 840.0C670.2 845.2 670.5 842.9 671.6 847.8C672.7 852.8 672.0 852.0 675.6 855.0C679.2 858.0 677.1 856.9 682.3 856.8C687.5 856.6 684.5 856.2 691.3 854.6C698.0 852.9 696.1 852.5 702.4 851.9C708.8 851.3 706.5 850.0 710.3 852.8C714.0 855.5 712.1 855.1 713.6 860.1C715.1 865.2 715.1 863.9 714.7 868.0C714.4 872.1 712.1 871.6 712.5 872.4C712.9 873.3 712.5 871.8 715.8 870.7C719.2 869.5 720.3 869.6 722.6 869.1 M615.7 815.0C617.2 813.6 616.8 812.8 620.2 810.9C623.6 809.0 622.1 808.9 625.9 809.3C629.6 809.7 628.5 810.1 631.5 812.0C634.6 813.9 633.8 814.0 634.9 815.0 M606.3 828.8C606.8 824.0 606.7 825.9 609.6 821.0C612.6 816.2 610.4 818.0 615.2 814.3C620.1 810.6 618.6 810.7 624.2 809.8C629.8 808.9 627.7 808.6 632.0 811.6C636.3 814.6 636.4 813.4 637.1 818.8C637.9 824.1 637.1 821.8 634.2 827.7C631.4 833.7 632.7 831.6 628.6 836.7C624.5 841.7 626.8 841.4 621.9 842.9C617.1 844.4 618.7 843.6 614.1 841.1C609.5 838.7 610.7 839.6 608.1 835.5C605.5 831.4 605.8 833.7 606.3 828.8Z M854.0 215.0 L854.5 222.0 M1095.0 509.0 L1100.0 508.5"/>
<path d="M231 471L418 354.500" stroke="#6c9fd2" stroke-width="2.800" stroke-opacity=".75" fill="none"/>
<g id="pin1"><path d="M411.500 334.500a4.500 4.500 0 0 1 4.500-4.500h4a4.500 4.500 0 0 1 4.500 4.500v13l-6.500 6.700-6.500-6.700z" fill="#43a56c" stroke="#1f6e45" stroke-width="1"/><path d="M418 341h6v6.300l-6 6.200z" fill="#3a9960"/><circle cx="418" cy="337.500" r="3.900" fill="#fff"/></g>
<g transform="translate(-187 116.800)"><path d="M411.500 334.500a4.500 4.500 0 0 1 4.500-4.500h4a4.500 4.500 0 0 1 4.500 4.500v13l-6.500 6.700-6.500-6.700z" fill="#43a56c" stroke="#1f6e45" stroke-width="1"/><path d="M418 341h6v6.300l-6 6.200z" fill="#3a9960"/><circle cx="418" cy="337.500" r="3.900" fill="#fff"/></g>
<path d="M369.500 375.600l12 12M381.500 375.600l-12 12" stroke="#ee1111" stroke-width="3.200"/>
</svg><!--/MAPSVG--></div>
  <div id="mapui">
<div class="mbtn" style="top:118px;height:62px"></div>
<svg class="abs" style="left:16px;top:126px" width="14" height="14" viewBox="0 0 14 14" stroke="#8e8e8e" stroke-width="1.800"><path d="M7 0v14M0 7h14"/></svg>
<div class="abs" style="left:17px;top:161.500px;width:12px;height:2.600px;background:#fff"></div>
<div class="mbtn" style="top:188px;height:32px"></div>
<svg class="abs" style="left:13px;top:193px" width="21" height="20" viewBox="0 0 21 20" fill="#fff"><path d="M10.500 0.500L0.500 10.500H3.500V19.500H8.300V13.500H12.700V19.500H17.500V10.500H20.500L17 7V2H14.500V4.500z"/></svg>
<div class="mbtn" style="top:223px;height:32px"></div>
<svg class="abs" style="left:13px;top:229px" width="20" height="20" viewBox="0 0 20 20" fill="none" stroke="#fff" stroke-width="1.600"><circle cx="10" cy="10" r="8.800"/><path d="M10 1.200v4M10 14.800v4M1.200 10h4M14.800 10h4" stroke-width="1.400"/></svg>
<!-- scale -->
<div class="abs" id="sc1" style="left:26px;top:702px;font-size:12.300px;transform:scaleX(.968);transform-origin:0 0;line-height:14px;color:#333;white-space:nowrap">Scale: 1:1,128</div>
<div class="abs" id="sc2" style="left:26px;top:716px;font-size:12.300px;transform:scaleX(.968);transform-origin:0 0;line-height:14px;color:#333;white-space:nowrap">Zoom Level: 19</div>
<div class="abs" style="left:25px;top:732.500px;width:126px;height:6px;border:2px solid #4a4a4a;border-bottom:none"></div>
<div class="abs" id="ft" style="left:144px;top:737px;font-size:11.500px;font-weight:bold;line-height:13px;color:#444;text-shadow:0 0 2px #fff,0 0 2px #fff;letter-spacing:-.3px">100ft</div>
<!-- coords -->
<div class="abs" style="left:200px;top:738px;width:173px;height:17px;background:rgba(95,95,95,.78)"></div>
<div class="abs" style="left:216px;top:738px;width:1px;height:17px;background:rgba(255,255,255,.35)"></div>
<div class="abs" style="left:356px;top:738px;width:1px;height:17px;background:rgba(255,255,255,.35)"></div>
<svg class="abs" style="left:203px;top:741px" width="11" height="11" viewBox="0 0 11 11" stroke="#ddd" stroke-width="1.200" fill="none"><path d="M5.500 0v4M5.500 7v4M0 5.500h4M7 5.500h4"/></svg>
<div class="abs" id="coord" style="left:221.500px;top:739px;font-size:12.200px;transform:scaleX(.926);transform-origin:0 0;line-height:15px;color:#fff;white-space:nowrap">-107.490 35.795 Degrees</div>
<svg class="abs" style="left:360px;top:743px" width="10" height="7" viewBox="0 0 10 7" stroke="#bbb" stroke-width="1.300" fill="none"><path d="M0.500 6.500L5 1l4.500 5.500"/></svg>
<!-- bottom tab -->
<div class="abs" style="left:519px;top:759px;width:61px;height:17px;background:#4c4c4c;border:1px solid #9a9a9a;border-bottom:none;border-radius:5px 5px 0 0"></div>
<svg class="abs" style="left:545px;top:765px" width="11" height="6" viewBox="0 0 11 6"><path d="M5.500 0L11 6H0z" fill="#bdbdbd"/></svg>
<div class="abs" style="left:723px;top:755px;width:20px;height:14px;background:rgba(255,255,255,.85);font-size:11px;line-height:14px;color:#888;padding-left:3px">U</div>
</div>
<div id="panel">
<div id="phead"><span class="ttl" id="pttl">Elevation Profile</span>
<svg class="abs" style="left:297px;top:11px" width="14" height="13" viewBox="0 0 14 13" fill="none" stroke="#fff" stroke-width="1.900"><path d="M1 6.300L7 1.200l6 5.100M1 11.800L7 6.700l6 5.100"/></svg>
<svg class="abs" style="left:333px;top:12px" width="12" height="11" viewBox="0 0 12 11" fill="none" stroke="#fff" stroke-width="2.300"><path d="M1.200 0.800l9.600 9.400M10.800 0.800L1.200 10.200"/></svg>
</div>
<div id="tabm"><span class="ptxt" id="tmeas" style="left:62px;top:5px;color:#9aa1ad;font-size:14px;line-height:19px">Measure</span></div>
<span class="ptxt" id="tres" style="left:228px;top:43px;color:#8b929c;font-size:14px;letter-spacing:-.12px;line-height:19px">Profile Result</span>
<span class="ptxt" id="l1" style="left:25px;top:80px">Hover over or touch the Elevations Profile chart to</span>
<span class="ptxt" id="l2" style="left:25px;top:97px">display elevations and show location on map.</span>
<svg class="abs" style="left:24px;top:119px" width="20" height="20" viewBox="0 0 20 20"><circle cx="10" cy="10" r="9.700" fill="#4a8fd6"/><circle cx="10" cy="5.300" r="1.500" fill="#fff"/><rect x="8.700" y="8" width="2.600" height="7.500" fill="#fff"/></svg>
<span class="ptxt" id="l3" style="left:49px;top:119px">Profile Information</span>
<span class="ptxt" id="l4" style="left:204px;top:119px;color:#5b2a91;text-decoration:underline">Prepare Download...</span>
<span class="ptxt" id="l5" style="left:300px;top:136px;color:#5b2a91;text-decoration:underline">Clear</span>
<svg class="abs" style="left:0;top:150px" width="358" height="490" viewBox="736 372 358 490">
<defs>
<linearGradient id="sky" x1="0" y1="0" x2="0" y2="1"><stop offset="0" stop-color="#4480b4"/><stop offset="1" stop-color="#a7d9e2"/></linearGradient>
<linearGradient id="gnd2" gradientUnits="userSpaceOnUse" x1="0" y1="421" x2="0" y2="782.500"><stop offset="0" stop-color="#8a4616"/><stop offset="1" stop-color="#cb843e"/></linearGradient>
<linearGradient id="gnd" x1="0" y1="0" x2="0" y2="1"><stop offset="0" stop-color="#8a4616"/><stop offset="1" stop-color="#cb843e"/></linearGradient>
<clipPath id="pc"><rect x="843" y="421" width="215.600" height="361.500"/></clipPath>
</defs>
<text class="dv" x="915.200" y="401.700" text-anchor="middle" font-size="17.100" id="ctitle">Elevation Profile</text>
<rect x="843" y="421" width="215.600" height="361.500" fill="url(#sky)"/>
<g clip-path="url(#pc)">
<path d="M843 439.2C843.8 440.0 849.4 445.8 851 447.5C852.6 449.2 857.8 454.3 859.5 455.8C861.2 457.3 866.0 461.0 868 462.5C870.0 464.0 876.9 469.2 879 470.8C881.1 472.4 887.0 476.6 889 478C891.0 479.4 897.3 483.8 899 485.3C900.7 486.9 904.5 491.5 906 493.5C907.5 495.5 912.5 502.4 914.5 505C916.5 507.6 923.5 516.4 926 519.5C928.5 522.6 936.9 531.9 939.5 535.7C942.1 539.5 949.5 552.9 952 557.5C954.5 562.1 962.5 576.8 965 581.3C967.5 585.8 974.5 597.7 977 602C979.5 606.3 987.5 620.4 989.7 624.3C991.9 628.2 997.1 637.7 999 641C1000.9 644.3 1006.8 654.5 1008.3 657.3C1009.8 660.0 1012.7 666.1 1014 668.5C1015.3 670.9 1019.9 677.9 1021.5 681C1023.1 684.1 1027.9 695.2 1030 700C1032.1 704.8 1040.3 723.5 1042.4 728.5C1044.5 733.5 1049.4 746.1 1051 750C1052.6 753.9 1057.8 765.3 1058.6 767L1058.600 782.500L843 782.500Z" fill="url(#gnd2)"/>
<path d="M843 439.2C843.8 440.0 849.4 445.8 851 447.5C852.6 449.2 857.8 454.3 859.5 455.8C861.2 457.3 866.0 461.0 868 462.5C870.0 464.0 876.9 469.2 879 470.8C881.1 472.4 887.0 476.6 889 478C891.0 479.4 897.3 483.8 899 485.3C900.7 486.9 904.5 491.5 906 493.5C907.5 495.5 912.5 502.4 914.5 505C916.5 507.6 923.5 516.4 926 519.5C928.5 522.6 936.9 531.9 939.5 535.7C942.1 539.5 949.5 552.9 952 557.5C954.5 562.1 962.5 576.8 965 581.3C967.5 585.8 974.5 597.7 977 602C979.5 606.3 987.5 620.4 989.7 624.3C991.9 628.2 997.1 637.7 999 641C1000.9 644.3 1006.8 654.5 1008.3 657.3C1009.8 660.0 1012.7 666.1 1014 668.5C1015.3 670.9 1019.9 677.9 1021.5 681C1023.1 684.1 1027.9 695.2 1030 700C1032.1 704.8 1040.3 723.5 1042.4 728.5C1044.5 733.5 1049.4 746.1 1051 750C1052.6 753.9 1057.8 765.3 1058.6 767" fill="none" stroke="#dcc6a8" stroke-width="2"/>
<g stroke="#fff" stroke-opacity=".36" stroke-width="1.500"><path d="M843 429.400H1059M843 505.500H1059M843 581.500H1059M843 657.500H1059M843 733.500H1059"/></g>
</g>
<path d="M1008.300 421V782.500" stroke="#2e2e2e" stroke-width="1.600"/>
<path d="M843 420.500V783.500" stroke="#222" stroke-width="2"/>
<path d="M842 782.700H1058.600" stroke="#222" stroke-width="2"/>
<g stroke="#777" stroke-width="1.300"><path d="M837 429.400h5M837 505.500h5M837 581.500h5M837 657.500h5M837 733.500h5M842.700 783.500v5M907.500 783.500v5M972.400 783.500v5M1037.500 783.500v5"/></g>
<g class="dv" font-size="13" text-anchor="end"><text x="833" y="434.200">7,466</text><text x="833" y="510.300">7,465</text><text x="833" y="586.300">7,464</text><text x="833" y="662.300">7,463</text><text x="833" y="738.300">7,462</text></g>
<g class="dv" font-size="13" text-anchor="middle"><text x="842.800" y="805.300">0.00</text><text x="907.500" y="805.300">0.01</text><text x="972.400" y="805.300">0.02</text><text x="1037.500" y="805.300">0.03</text></g>
<text class="dv" x="950.400" y="825.200" text-anchor="middle" font-size="13.960" id="xtitle">Distance in Miles</text>
<text class="dv" transform="translate(776.200 602.500) rotate(-90) scale(1 1.080)" text-anchor="middle" font-size="14.240" style="fill:#858585" id="ytitle">Elevation in Feet</text>
<path d="M1002.300 651.300l12 12M1014.300 651.300l-12 12" stroke="#ee1111" stroke-width="3"/>
<rect x="948" y="414.500" width="72" height="16" rx="3" fill="#6f6f6f" stroke="#3c3c3c" stroke-width="1.200"/>
<text x="984" y="426.700" text-anchor="middle" font-size="10.900" style="font-family:'DejaVu Sans','Liberation Sans',sans-serif;font-weight:bold" fill="#fff">7,463 Feet</text>
<rect x="969.500" y="441.800" width="19" height="14.600" rx="2.500" fill="#ee1111" stroke="#a00" stroke-width=".8"/>
<text x="979" y="452.800" text-anchor="middle" font-size="10" style="font-family:'DejaVu Sans','Liberation Sans',sans-serif;font-weight:bold" fill="#fff">-3</text>
</svg>
<svg class="abs" style="left:345px;top:639px" width="12" height="12" viewBox="0 0 12 12" fill="none" stroke="#b5b5b5" stroke-width="1"><path d="M11.500 3L3 11.500M11.500 7L7 11.500"/></svg>
</div>
  <div id="footer"></div>
</div>
<div class="abs" style="left:0;top:62px;width:1px;height:821px;background:#3a82c4"></div>
<div id="vscroll">
<svg class="abs" style="left:3px;top:6px" width="9" height="6" viewBox="0 0 9 6" fill="none" stroke="#505050" stroke-width="1.600"><path d="M0.700 5.200L4.500 1.400l3.800 3.800"/></svg>
<div class="abs" style="left:0;top:17px;width:15px;height:712px;background:#cdcdcd"></div>
<svg class="abs" style="left:3px;top:768px" width="9" height="6" viewBox="0 0 9 6" fill="none" stroke="#505050" stroke-width="1.600"><path d="M0.700 0.800L4.500 4.600l3.800-3.800"/></svg>
</div>
<div class="abs" style="left:1117px;top:62px;width:1px;height:821px;background:#3a78b4"></div>

</body>
</html>
